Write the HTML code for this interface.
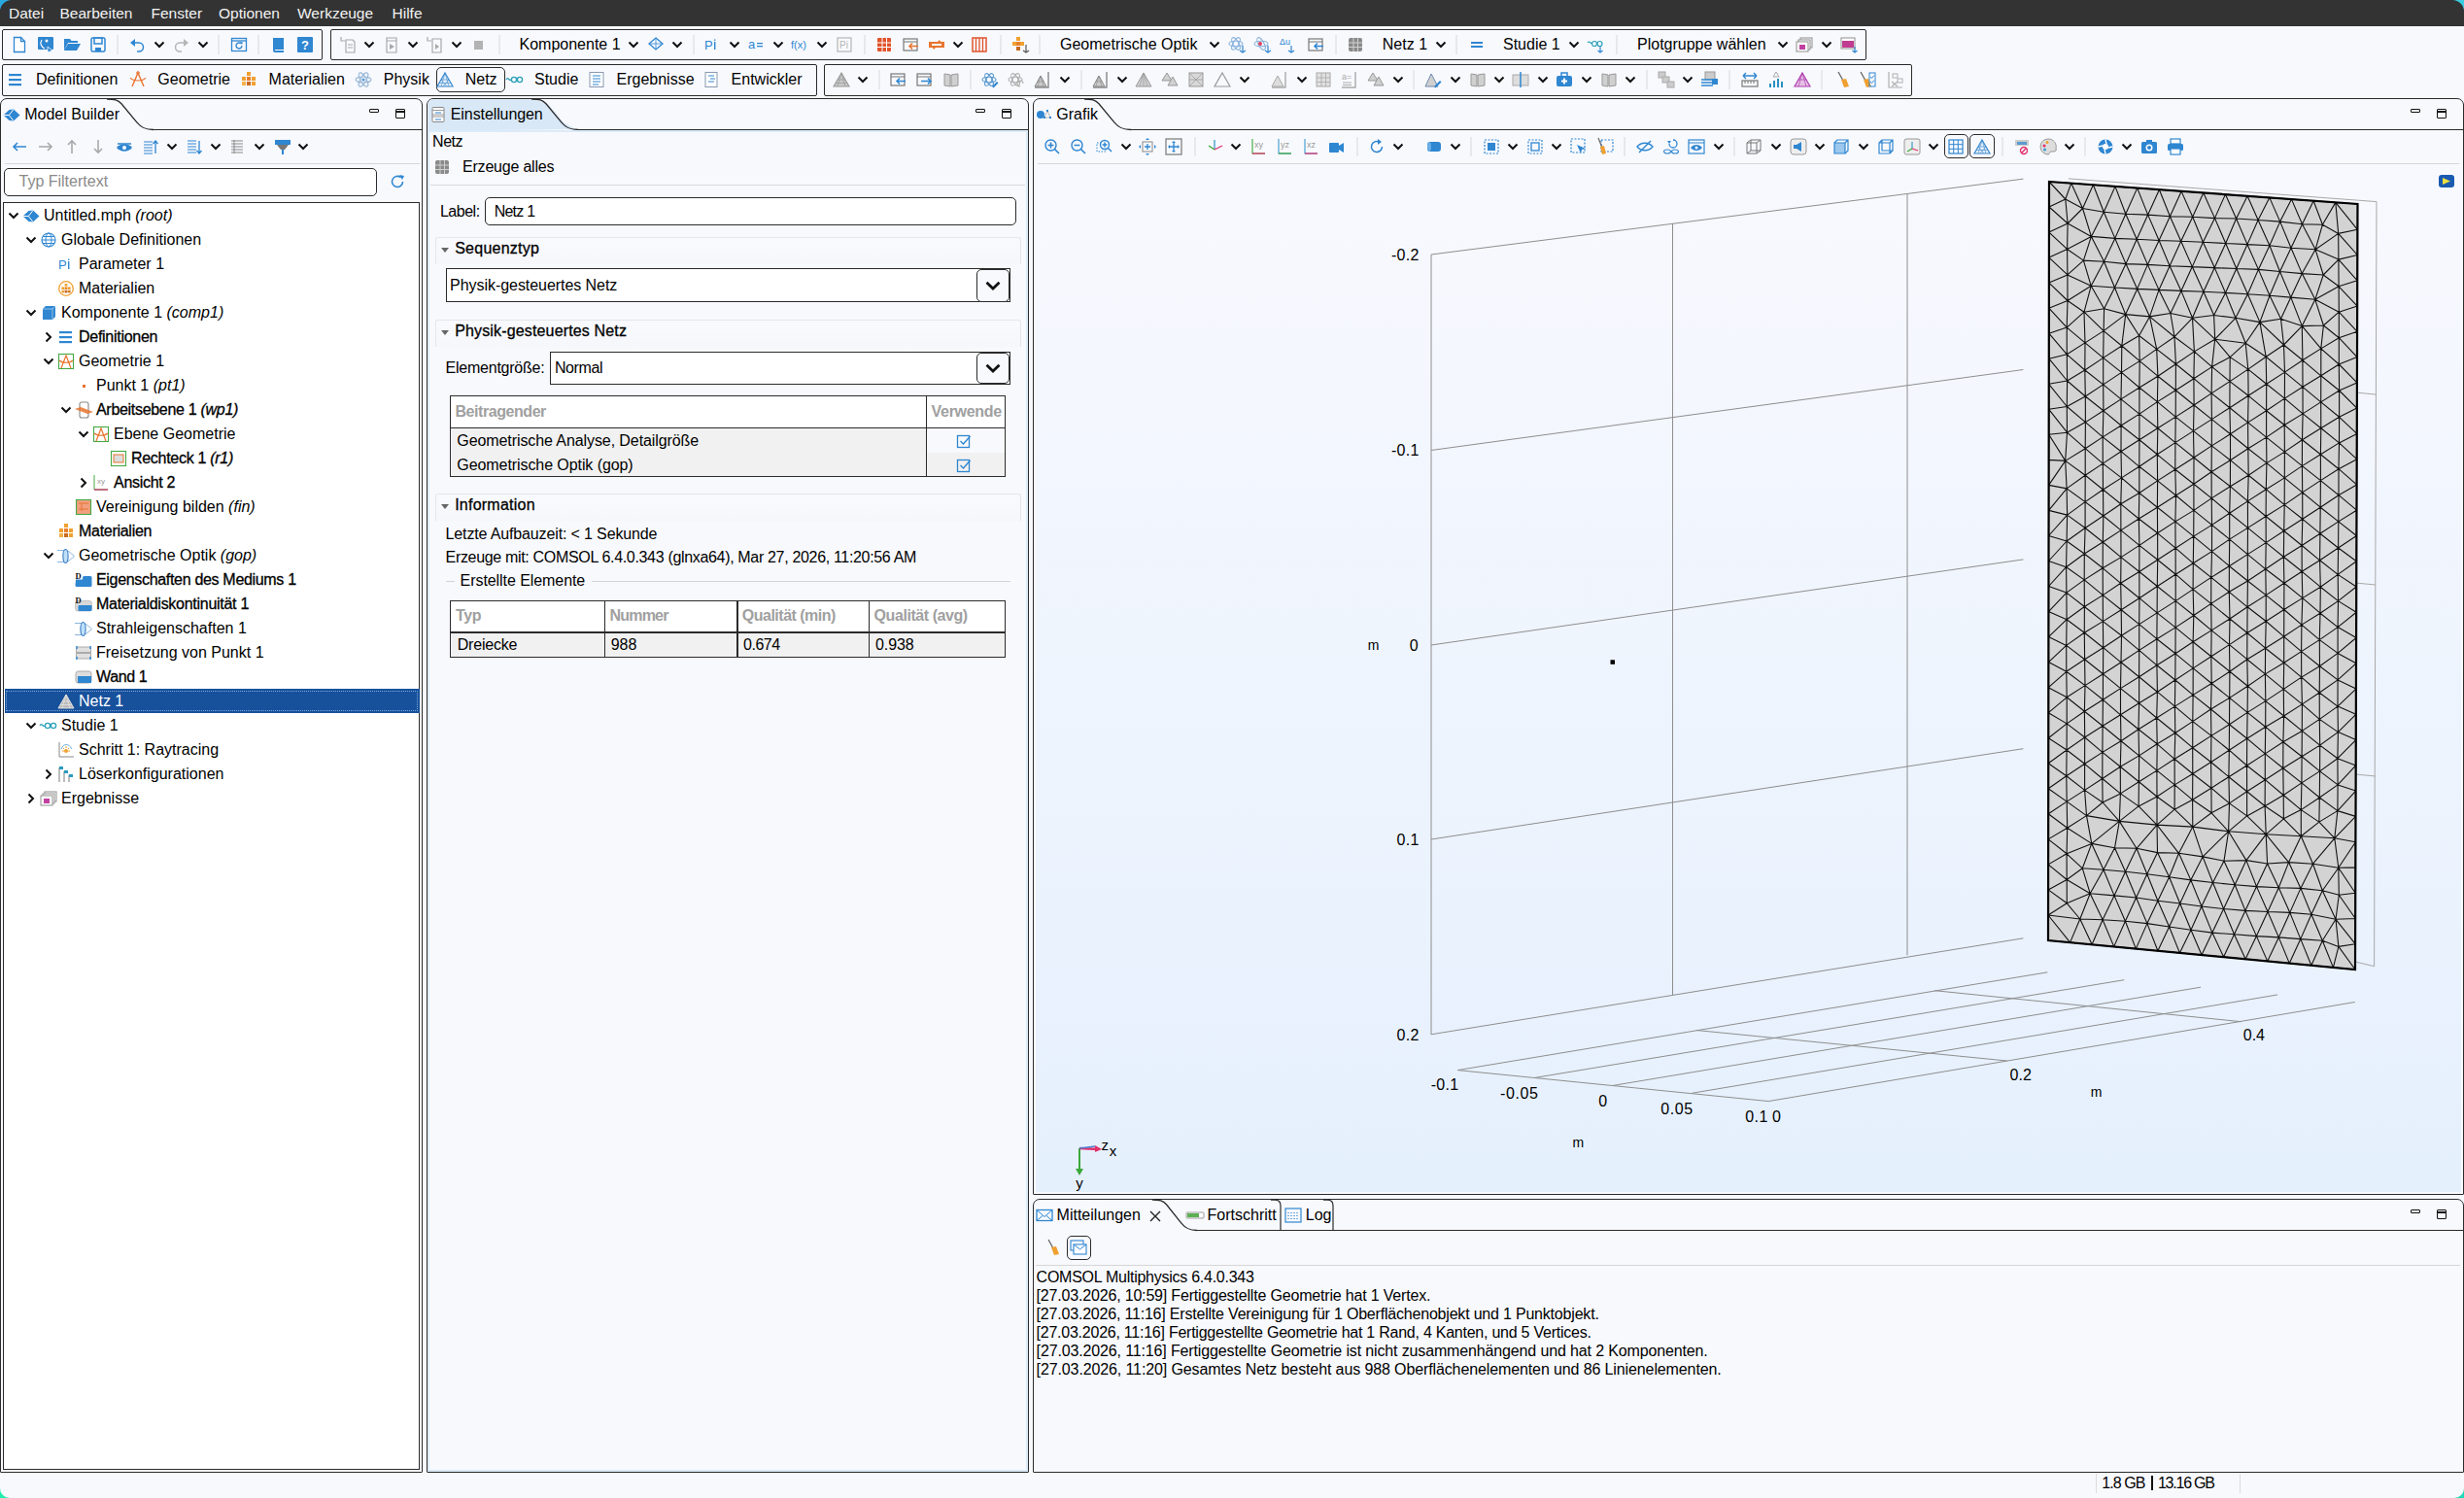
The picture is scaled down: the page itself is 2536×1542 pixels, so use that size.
<!DOCTYPE html><html><head><meta charset="utf-8"><style>html,body{margin:0;padding:0;width:2536px;height:1542px;overflow:hidden;background:#f8f9fd;}body{position:relative;font-family:"Liberation Sans",sans-serif;}.t{position:absolute;white-space:pre;}i{font-style:italic}</style></head><body>
<div style="position:absolute;left:0px;top:0px;width:2536px;height:27px;background:#333333"></div>
<svg style="position:absolute;left:0px;top:0px;" width="12" height="12" viewBox="0 0 12 12"><path d="M0 0h12A12 12 0 0 0 0 12z" fill="#2aa9e0"/></svg>
<svg style="position:absolute;left:2524px;top:0px;" width="12" height="12" viewBox="0 0 12 12"><path d="M0 0h12v12A12 12 0 0 0 0 0z" fill="#3ccbe0"/></svg>
<div class="t " style="left:9px;top:3.5px;font-size:15.5px;line-height:20px;font-weight:normal;color:#f2f2f2;">Datei</div>
<div class="t " style="left:61.5px;top:3.5px;font-size:15.5px;line-height:20px;font-weight:normal;color:#f2f2f2;">Bearbeiten</div>
<div class="t " style="left:155.5px;top:3.5px;font-size:15.5px;line-height:20px;font-weight:normal;color:#f2f2f2;">Fenster</div>
<div class="t " style="left:225px;top:3.5px;font-size:15.5px;line-height:20px;font-weight:normal;color:#f2f2f2;">Optionen</div>
<div class="t " style="left:306px;top:3.5px;font-size:15.5px;line-height:20px;font-weight:normal;color:#f2f2f2;">Werkzeuge</div>
<div class="t " style="left:403.5px;top:3.5px;font-size:15.5px;line-height:20px;font-weight:normal;color:#f2f2f2;">Hilfe</div>
<div style="position:absolute;left:2px;top:30px;width:330px;height:32px;box-sizing:border-box;border:1.3px solid #2b2b2b;border-radius:2px"></div>
<div style="position:absolute;left:340px;top:30px;width:1581px;height:32px;box-sizing:border-box;border:1.3px solid #2b2b2b;border-radius:2px"></div>
<svg style="position:absolute;left:9.5px;top:35.5px" width="20" height="20" viewBox="0 0 20 20"><path d="M4.5 2.5h7l4 4v11h-11z" fill="#fff" stroke="#2f86d1" stroke-width="1.3"/><path d="M11.5 2.5v4h4" fill="none" stroke="#2f86d1" stroke-width="1.3"/></svg>
<svg style="position:absolute;left:36.8px;top:35.5px" width="20" height="20" viewBox="0 0 20 20"><rect x="2" y="2" width="16" height="13" rx="1" fill="#2f86d1"/><path d="M6 5a6 6 0 0 0 3 9" stroke="#fff" stroke-width="1.2" fill="none"/><path d="M12 12l5 4-5 2z" fill="#2f86d1" stroke="#fff" stroke-width=".8"/><circle cx="11" cy="6" r="1.5" fill="#fff"/></svg>
<svg style="position:absolute;left:63.5px;top:35.5px" width="20" height="20" viewBox="0 0 20 20"><path d="M2 4h6l1.5 2H16v2H6L2 16z" fill="#2f86d1"/><path d="M6 9h13l-4 7H2z" fill="#2f86d1"/></svg>
<svg style="position:absolute;left:90.8px;top:35.5px" width="20" height="20" viewBox="0 0 20 20"><rect x="3" y="3" width="14" height="14" rx="1.5" fill="none" stroke="#2f86d1" stroke-width="1.5"/><rect x="6" y="3" width="8" height="6" fill="none" stroke="#2f86d1" stroke-width="1.5"/><rect x="7" y="13" width="6" height="4" fill="#2f86d1"/></svg>
<svg style="position:absolute;left:111.0px;top:35.5px" width="20" height="20" viewBox="0 0 20 20"><line x1="10" y1="0" x2="10" y2="20" stroke="#d8d8d8" stroke-width="1"/></svg>
<svg style="position:absolute;left:132.0px;top:35.5px" width="20" height="20" viewBox="0 0 20 20"><path d="M5 8h6a4.5 4.5 0 0 1 0 9H9" fill="none" stroke="#2f86d1" stroke-width="1.5"/><path d="M2 8l5-4v8z" fill="#2f86d1"/></svg>
<svg style="position:absolute;left:153.6px;top:35.5px" width="20" height="20" viewBox="0 0 20 20"><polyline points="5.5,7.5 10,12 14.5,7.5" fill="none" stroke="#111" stroke-width="2"/></svg>
<svg style="position:absolute;left:176.0px;top:35.5px" width="20" height="20" viewBox="0 0 20 20"><path d="M15 8H9a4.5 4.5 0 0 0 0 9h2" fill="none" stroke="#b5b5b5" stroke-width="1.5"/><path d="M18 8l-5-4v8z" fill="#b5b5b5"/></svg>
<svg style="position:absolute;left:198.6px;top:35.5px" width="20" height="20" viewBox="0 0 20 20"><polyline points="5.5,7.5 10,12 14.5,7.5" fill="none" stroke="#111" stroke-width="2"/></svg>
<svg style="position:absolute;left:215.0px;top:35.5px" width="20" height="20" viewBox="0 0 20 20"><line x1="10" y1="0" x2="10" y2="20" stroke="#d8d8d8" stroke-width="1"/></svg>
<svg style="position:absolute;left:235.5px;top:35.5px" width="20" height="20" viewBox="0 0 20 20"><rect x="2.5" y="3.5" width="15" height="13" fill="none" stroke="#2f86d1" stroke-width="1.3"/><line x1="2.5" y1="6" x2="17.5" y2="6" stroke="#2f86d1" stroke-width="1.3"/><path d="M13 11a3 3 0 1 1-1-2.3" fill="none" stroke="#2f86d1" stroke-width="1.4"/><path d="M11 7l3 0.5-1 2.5z" fill="#2f86d1"/></svg>
<svg style="position:absolute;left:256.0px;top:35.5px" width="20" height="20" viewBox="0 0 20 20"><line x1="10" y1="0" x2="10" y2="20" stroke="#d8d8d8" stroke-width="1"/></svg>
<svg style="position:absolute;left:276.5px;top:35.5px" width="20" height="20" viewBox="0 0 20 20"><path d="M4 3h11v15H6a2 2 0 0 1-2-2z" fill="#2f86d1"/><line x1="6" y1="15.5" x2="15" y2="15.5" stroke="#fff" stroke-width="1"/></svg>
<svg style="position:absolute;left:303.8px;top:35.5px" width="20" height="20" viewBox="0 0 20 20"><rect x="2" y="2" width="16" height="16" rx="1" fill="#2f86d1"/><text x="10" y="15" font-family="Liberation Sans" font-size="13" font-weight="bold" fill="#fff" text-anchor="middle">?</text></svg>
<svg style="position:absolute;left:348.4px;top:35.5px" width="20" height="20" viewBox="0 0 20 20"><path d="M8 5h7l2 2v11H8z" fill="none" stroke="#a8a8a8" stroke-width="1.2"/><path d="M3 2v4h4" fill="none" stroke="#a8a8a8" stroke-width="1.2"/><line x1="10" y1="10" x2="15" y2="10" stroke="#a8a8a8"/><line x1="10" y1="13" x2="15" y2="13" stroke="#a8a8a8"/></svg>
<svg style="position:absolute;left:369.7px;top:35.5px" width="20" height="20" viewBox="0 0 20 20"><polyline points="5.5,7.5 10,12 14.5,7.5" fill="none" stroke="#111" stroke-width="2"/></svg>
<svg style="position:absolute;left:392.6px;top:35.5px" width="20" height="20" viewBox="0 0 20 20"><path d="M5 3h10v15H5z" fill="none" stroke="#a8a8a8" stroke-width="1.2"/><line x1="5" y1="6" x2="15" y2="6" stroke="#a8a8a8"/><path d="M8 9l5 3-5 3z" fill="#a8a8a8"/></svg>
<svg style="position:absolute;left:415.0px;top:35.5px" width="20" height="20" viewBox="0 0 20 20"><polyline points="5.5,7.5 10,12 14.5,7.5" fill="none" stroke="#111" stroke-width="2"/></svg>
<svg style="position:absolute;left:438.0px;top:35.5px" width="20" height="20" viewBox="0 0 20 20"><path d="M7 4h9v14H7z" fill="none" stroke="#a8a8a8" stroke-width="1.2"/><path d="M2 2v4h4" fill="none" stroke="#a8a8a8" stroke-width="1.2"/><path d="M10 9l4 3-4 3z" fill="#a8a8a8"/></svg>
<svg style="position:absolute;left:459.6px;top:35.5px" width="20" height="20" viewBox="0 0 20 20"><polyline points="5.5,7.5 10,12 14.5,7.5" fill="none" stroke="#111" stroke-width="2"/></svg>
<svg style="position:absolute;left:482.7px;top:35.5px" width="20" height="20" viewBox="0 0 20 20"><rect x="5" y="6" width="9" height="9" fill="#b3b3b3"/></svg>
<svg style="position:absolute;left:503.5px;top:35.5px" width="20" height="20" viewBox="0 0 20 20"><line x1="10" y1="0" x2="10" y2="20" stroke="#d8d8d8" stroke-width="1"/></svg>
<svg style="position:absolute;left:642.0px;top:35.5px" width="20" height="20" viewBox="0 0 20 20"><polyline points="5.5,7.5 10,12 14.5,7.5" fill="none" stroke="#111" stroke-width="2"/></svg>
<svg style="position:absolute;left:665.0px;top:35.5px" width="20" height="20" viewBox="0 0 20 20"><path d="M10 3l7 6-7 6-7-6z" fill="none" stroke="#2f86d1" stroke-width="1.3"/><path d="M3 9h14M10 3v12" stroke="#2f86d1" stroke-width=".8"/></svg>
<svg style="position:absolute;left:686.6px;top:35.5px" width="20" height="20" viewBox="0 0 20 20"><polyline points="5.5,7.5 10,12 14.5,7.5" fill="none" stroke="#111" stroke-width="2"/></svg>
<svg style="position:absolute;left:703.6px;top:35.5px" width="20" height="20" viewBox="0 0 20 20"><line x1="10" y1="0" x2="10" y2="20" stroke="#d8d8d8" stroke-width="1"/></svg>
<svg style="position:absolute;left:723.0px;top:35.5px" width="20" height="20" viewBox="0 0 20 20"><text x="2" y="15" font-family="Liberation Sans" font-size="13" fill="#2f86d1">P</text><rect x="12" y="7" width="1.4" height="8" fill="#2f86d1"/><rect x="12" y="4.5" width="1.4" height="1.4" fill="#2f86d1"/></svg>
<svg style="position:absolute;left:745.7px;top:35.5px" width="20" height="20" viewBox="0 0 20 20"><polyline points="5.5,7.5 10,12 14.5,7.5" fill="none" stroke="#111" stroke-width="2"/></svg>
<svg style="position:absolute;left:769.0px;top:35.5px" width="20" height="20" viewBox="0 0 20 20"><text x="1" y="14" font-family="Liberation Sans" font-size="13" fill="#2f86d1">a</text><rect x="10" y="8" width="6" height="1.3" fill="#2f86d1"/><rect x="10" y="11" width="6" height="1.3" fill="#2f86d1"/></svg>
<svg style="position:absolute;left:790.6px;top:35.5px" width="20" height="20" viewBox="0 0 20 20"><polyline points="5.5,7.5 10,12 14.5,7.5" fill="none" stroke="#111" stroke-width="2"/></svg>
<svg style="position:absolute;left:814.4px;top:35.5px" width="20" height="20" viewBox="0 0 20 20"><text x="0" y="14" font-family="Liberation Sans" font-size="11" fill="#2f86d1">f(x)</text></svg>
<svg style="position:absolute;left:836.0px;top:35.5px" width="20" height="20" viewBox="0 0 20 20"><polyline points="5.5,7.5 10,12 14.5,7.5" fill="none" stroke="#111" stroke-width="2"/></svg>
<svg style="position:absolute;left:858.5px;top:35.5px" width="20" height="20" viewBox="0 0 20 20"><rect x="3" y="3" width="14" height="14" fill="none" stroke="#b5b5b5" stroke-width="1.2"/><text x="5" y="14" font-family="Liberation Sans" font-size="10" fill="#b5b5b5">Pi</text></svg>
<svg style="position:absolute;left:879.8px;top:35.5px" width="20" height="20" viewBox="0 0 20 20"><line x1="10" y1="0" x2="10" y2="20" stroke="#d8d8d8" stroke-width="1"/></svg>
<svg style="position:absolute;left:899.7px;top:35.5px" width="20" height="20" viewBox="0 0 20 20"><rect x="3" y="3" width="14" height="14" rx="1" fill="#e0532c"/><path d="M3 8h14M3 12.5h14M8 3v14M12.5 3v14" stroke="#fff" stroke-width="1"/></svg>
<svg style="position:absolute;left:926.6px;top:35.5px" width="20" height="20" viewBox="0 0 20 20"><rect x="3" y="4" width="14" height="12" fill="none" stroke="#777" stroke-width="1.2"/><line x1="3" y1="7" x2="17" y2="7" stroke="#777"/><path d="M18 11.5H9M12 8.5l-3 3 3 3" fill="none" stroke="#e8742e" stroke-width="1.5"/></svg>
<svg style="position:absolute;left:953.6px;top:35.5px" width="20" height="20" viewBox="0 0 20 20"><path d="M4 8h10l-2-2M16 12H6l2 2" fill="none" stroke="#e8742e" stroke-width="2.2"/><rect x="2" y="7" width="3" height="6" fill="#e8742e"/><rect x="15" y="7" width="3" height="6" fill="#e8742e"/></svg>
<svg style="position:absolute;left:975.8px;top:35.5px" width="20" height="20" viewBox="0 0 20 20"><polyline points="5.5,7.5 10,12 14.5,7.5" fill="none" stroke="#111" stroke-width="2"/></svg>
<svg style="position:absolute;left:998.2px;top:35.5px" width="20" height="20" viewBox="0 0 20 20"><rect x="3" y="3" width="14" height="14" fill="none" stroke="#e0532c" stroke-width="1.5"/><path d="M6.5 3v14M10 3v14M13.5 3v14" stroke="#e0532c" stroke-width="1.3"/></svg>
<svg style="position:absolute;left:1019.5px;top:35.5px" width="20" height="20" viewBox="0 0 20 20"><line x1="10" y1="0" x2="10" y2="20" stroke="#d8d8d8" stroke-width="1"/></svg>
<svg style="position:absolute;left:1039.7px;top:35.5px" width="20" height="20" viewBox="0 0 20 20"><rect x="6" y="2" width="4" height="4" fill="#f0a030"/><rect x="2" y="7" width="4" height="4" fill="#f0a030"/><rect x="6" y="7" width="4" height="4" fill="#e8802a"/><rect x="10" y="7" width="4" height="4" fill="#f0a030"/><rect x="6" y="12" width="4" height="4" fill="#c86a20"/><path d="M16 10v8M13 16l3 2 3-2" fill="none" stroke="#555" stroke-width="1.2"/></svg>
<svg style="position:absolute;left:1060.0px;top:35.5px" width="20" height="20" viewBox="0 0 20 20"><line x1="10" y1="0" x2="10" y2="20" stroke="#d8d8d8" stroke-width="1"/></svg>
<svg style="position:absolute;left:1239.7px;top:35.5px" width="20" height="20" viewBox="0 0 20 20"><polyline points="5.5,7.5 10,12 14.5,7.5" fill="none" stroke="#111" stroke-width="2"/></svg>
<svg style="position:absolute;left:1263.0px;top:35.5px" width="20" height="20" viewBox="0 0 20 20"><ellipse cx="9" cy="9" rx="7" ry="2.8" fill="none" stroke="#8ab4dd" stroke-width="1.1"/><ellipse cx="9" cy="9" rx="7" ry="2.8" fill="none" stroke="#8ab4dd" stroke-width="1.1" transform="rotate(60 9 9)"/><ellipse cx="9" cy="9" rx="7" ry="2.8" fill="none" stroke="#8ab4dd" stroke-width="1.1" transform="rotate(-60 9 9)"/><path d="M16 11v7M13 16l3 2 3-2" fill="none" stroke="#2f86d1" stroke-width="1.2"/></svg>
<svg style="position:absolute;left:1289.0px;top:35.5px" width="20" height="20" viewBox="0 0 20 20"><ellipse cx="9" cy="9" rx="7" ry="2.8" fill="none" stroke="#8ab4dd" stroke-width="1.1"/><ellipse cx="9" cy="9" rx="7" ry="2.8" fill="none" stroke="#8ab4dd" stroke-width="1.1" transform="rotate(60 9 9)"/><circle cx="8" cy="9" r="2" fill="#e04060"/><path d="M16 11v7M13 16l3 2 3-2" fill="none" stroke="#2f86d1" stroke-width="1.2"/></svg>
<svg style="position:absolute;left:1316.0px;top:35.5px" width="20" height="20" viewBox="0 0 20 20"><text x="1" y="10" font-family="Liberation Sans" font-size="9" fill="#2f86d1">Δu</text><path d="M13 11v7M10 16l3 2 3-2" fill="none" stroke="#2f86d1" stroke-width="1.2"/></svg>
<svg style="position:absolute;left:1343.8px;top:35.5px" width="20" height="20" viewBox="0 0 20 20"><rect x="3" y="4" width="14" height="12" fill="none" stroke="#777" stroke-width="1.2"/><line x1="3" y1="7" x2="17" y2="7" stroke="#777"/><path d="M18 11.5H9M12 8.5l-3 3 3 3" fill="none" stroke="#2f86d1" stroke-width="1.5"/></svg>
<svg style="position:absolute;left:1364.5px;top:35.5px" width="20" height="20" viewBox="0 0 20 20"><line x1="10" y1="0" x2="10" y2="20" stroke="#d8d8d8" stroke-width="1"/></svg>
<svg style="position:absolute;left:1385.0px;top:35.5px" width="20" height="20" viewBox="0 0 20 20"><rect x="3" y="3" width="14" height="14" rx="2" fill="#8a8a8a"/><path d="M3 8h14M3 12.5h14M8 3v14M12.5 3v14" stroke="#d0d0d0" stroke-width="1"/></svg>
<svg style="position:absolute;left:1473.0px;top:35.5px" width="20" height="20" viewBox="0 0 20 20"><polyline points="5.5,7.5 10,12 14.5,7.5" fill="none" stroke="#111" stroke-width="2"/></svg>
<svg style="position:absolute;left:1489.0px;top:35.5px" width="20" height="20" viewBox="0 0 20 20"><line x1="10" y1="0" x2="10" y2="20" stroke="#d8d8d8" stroke-width="1"/></svg>
<svg style="position:absolute;left:1510.0px;top:35.5px" width="20" height="20" viewBox="0 0 20 20"><rect x="4" y="7" width="12" height="2" fill="#2f86d1"/><rect x="4" y="11" width="12" height="2" fill="#2f86d1"/></svg>
<svg style="position:absolute;left:1610.0px;top:35.5px" width="20" height="20" viewBox="0 0 20 20"><polyline points="5.5,7.5 10,12 14.5,7.5" fill="none" stroke="#111" stroke-width="2"/></svg>
<svg style="position:absolute;left:1633.0px;top:35.5px" width="20" height="20" viewBox="0 0 20 20"><circle cx="8" cy="9" r="2.5" fill="none" stroke="#2aa0b8" stroke-width="1.2"/><circle cx="13.5" cy="9" r="2.5" fill="none" stroke="#2aa0b8" stroke-width="1.2"/><path d="M1 8c2-3 3 2 4.5 0" fill="none" stroke="#2aa0b8" stroke-width="1.2"/><path d="M14 12v6M11.5 16l2.5 2 2.5-2" fill="none" stroke="#2f86d1" stroke-width="1.2"/></svg>
<svg style="position:absolute;left:1653.7px;top:35.5px" width="20" height="20" viewBox="0 0 20 20"><line x1="10" y1="0" x2="10" y2="20" stroke="#d8d8d8" stroke-width="1"/></svg>
<svg style="position:absolute;left:1824.8px;top:35.5px" width="20" height="20" viewBox="0 0 20 20"><polyline points="5.5,7.5 10,12 14.5,7.5" fill="none" stroke="#111" stroke-width="2"/></svg>
<svg style="position:absolute;left:1847.4px;top:35.5px" width="20" height="20" viewBox="0 0 20 20"><rect x="6" y="3" width="12" height="10" fill="none" stroke="#999" stroke-width="1.1"/><rect x="4" y="5" width="12" height="10" fill="#fff" stroke="#999" stroke-width="1.1"/><rect x="2" y="7" width="12" height="10" fill="#fff" stroke="#999" stroke-width="1.1"/><rect x="5" y="10" width="6" height="5" fill="#c040a0"/></svg>
<svg style="position:absolute;left:1869.5px;top:35.5px" width="20" height="20" viewBox="0 0 20 20"><polyline points="5.5,7.5 10,12 14.5,7.5" fill="none" stroke="#111" stroke-width="2"/></svg>
<svg style="position:absolute;left:1893.0px;top:35.5px" width="20" height="20" viewBox="0 0 20 20"><rect x="2" y="3" width="14" height="11" fill="#fff" stroke="#999" stroke-width="1.1"/><rect x="3" y="6" width="12" height="7" fill="#c03c90"/><path d="M16 12v6M13.5 16l2.5 2 2.5-2" fill="none" stroke="#2f86d1" stroke-width="1.2"/></svg>
<div class="t " style="left:534.5px;top:35.5px;font-size:16px;line-height:20px;font-weight:normal;color:#000;">Komponente 1</div>
<div class="t " style="left:1091px;top:35.5px;font-size:16px;line-height:20px;font-weight:normal;color:#000;">Geometrische Optik</div>
<div class="t " style="left:1422.8px;top:35.5px;font-size:16px;line-height:20px;font-weight:normal;color:#000;">Netz 1</div>
<div class="t " style="left:1547px;top:35.5px;font-size:16px;line-height:20px;font-weight:normal;color:#000;">Studie 1</div>
<div class="t " style="left:1685px;top:35.5px;font-size:16px;line-height:20px;font-weight:normal;color:#000;">Plotgruppe wählen</div>
<div style="position:absolute;left:2px;top:66px;width:839px;height:33px;box-sizing:border-box;border:1.3px solid #2b2b2b;border-radius:2px"></div>
<div style="position:absolute;left:848px;top:66px;width:1120px;height:33px;box-sizing:border-box;border:1.3px solid #2b2b2b;border-radius:2px"></div>
<div style="position:absolute;left:449.3px;top:69px;width:70.3px;height:26px;box-sizing:border-box;border:1.3px solid #2b2b2b;border-radius:5px"></div>
<svg style="position:absolute;left:5.6px;top:72.0px" width="20" height="20" viewBox="0 0 20 20"><rect x="3" y="4" width="13" height="2.2" fill="#2f86d1"/><rect x="3" y="9" width="13" height="2.2" fill="#2f86d1"/><rect x="3" y="14" width="13" height="2.2" fill="#2f86d1"/></svg>
<svg style="position:absolute;left:132.3px;top:72.0px" width="20" height="20" viewBox="0 0 20 20"><path d="M4 17L10 3 16 17" fill="none" stroke="#e8742e" stroke-width="1.4"/><path d="M2 8c3 4 13 4 16 0" fill="none" stroke="#e8742e" stroke-width="1.2"/><circle cx="10" cy="3" r="1.3" fill="none" stroke="#e8742e"/></svg>
<svg style="position:absolute;left:245.8px;top:72.0px" width="20" height="20" viewBox="0 0 20 20"><rect x="8" y="2" width="4" height="4" fill="#f0a030"/><rect x="3" y="7" width="4" height="4" fill="#f0a030"/><rect x="8" y="7" width="4" height="4" fill="#e8802a"/><rect x="13" y="7" width="4" height="4" fill="#f0a030"/><rect x="3" y="12" width="4" height="4" fill="#f4b04a"/><rect x="8" y="12" width="4" height="4" fill="#c86a20"/><rect x="13" y="12" width="4" height="4" fill="#f0a030"/></svg>
<svg style="position:absolute;left:364.0px;top:72.0px" width="20" height="20" viewBox="0 0 20 20"><ellipse cx="10" cy="10" rx="8" ry="3" fill="none" stroke="#9ab8d8" stroke-width="1.1"/><ellipse cx="10" cy="10" rx="8" ry="3" fill="none" stroke="#9ab8d8" stroke-width="1.1" transform="rotate(60 10 10)"/><ellipse cx="10" cy="10" rx="8" ry="3" fill="none" stroke="#9ab8d8" stroke-width="1.1" transform="rotate(-60 10 10)"/><circle cx="10" cy="10" r="1.6" fill="#5a9ad0"/></svg>
<svg style="position:absolute;left:448.4px;top:72.0px" width="20" height="20" viewBox="0 0 20 20"><path d="M10 3L18 17H2z" fill="#e8f0f8" stroke="#3a8ad0" stroke-width="1.2"/><path d="M6 10h8M4 13.5h12M10 3l-4 14M10 3l4 14M6 10l6 7M14 10l-6 7" stroke="#3a8ad0" stroke-width=".6"/></svg>
<svg style="position:absolute;left:520.0px;top:72.0px" width="20" height="20" viewBox="0 0 20 20"><circle cx="9" cy="10" r="2.6" fill="none" stroke="#2aa0b8" stroke-width="1.3"/><circle cx="15" cy="10" r="2.6" fill="none" stroke="#2aa0b8" stroke-width="1.3"/><path d="M1 10c2-4 3 2 5 0" fill="none" stroke="#2aa0b8" stroke-width="1.3"/></svg>
<svg style="position:absolute;left:603.5px;top:72.0px" width="20" height="20" viewBox="0 0 20 20"><rect x="3" y="2.5" width="14" height="15" fill="#fff" stroke="#8a9ab0" stroke-width="1"/><path d="M6 6h8M6 9h8M6 12h8M6 15h6" stroke="#2f86d1" stroke-width="1"/></svg>
<svg style="position:absolute;left:722.0px;top:72.0px" width="20" height="20" viewBox="0 0 20 20"><rect x="4" y="2.5" width="12" height="15" fill="#fff" stroke="#8a9ab0" stroke-width="1"/><path d="M7 6h6M9 9h5M7 12h6" stroke="#2f86d1" stroke-width="1"/></svg>
<div class="t " style="left:36.9px;top:72.0px;font-size:16px;line-height:20px;font-weight:normal;color:#000;">Definitionen</div>
<div class="t " style="left:162.3px;top:72.0px;font-size:16px;line-height:20px;font-weight:normal;color:#000;">Geometrie</div>
<div class="t " style="left:276.6px;top:72.0px;font-size:16px;line-height:20px;font-weight:normal;color:#000;">Materialien</div>
<div class="t " style="left:394.8px;top:72.0px;font-size:16px;line-height:20px;font-weight:normal;color:#000;">Physik</div>
<div class="t " style="left:478.7px;top:72.0px;font-size:16px;line-height:20px;font-weight:normal;color:#000;">Netz</div>
<div class="t " style="left:550px;top:72.0px;font-size:16px;line-height:20px;font-weight:normal;color:#000;">Studie</div>
<div class="t " style="left:634.5px;top:72.0px;font-size:16px;line-height:20px;font-weight:normal;color:#000;">Ergebnisse</div>
<div class="t " style="left:752.6px;top:72.0px;font-size:16px;line-height:20px;font-weight:normal;color:#000;">Entwickler</div>
<svg style="position:absolute;left:855.6px;top:72.0px" width="20" height="20" viewBox="0 0 20 20"><path d="M10 3L18 17H2z" fill="#c8c8c8" stroke="#9a9a9a" stroke-width="1.1"/><path d="M6 10h8M4 13.5h12M10 3l-4 14M10 3l4 14" stroke="#9a9a9a" stroke-width=".7"/></svg>
<svg style="position:absolute;left:877.5px;top:72.0px" width="20" height="20" viewBox="0 0 20 20"><polyline points="5.5,7.5 10,12 14.5,7.5" fill="none" stroke="#111" stroke-width="2"/></svg>
<svg style="position:absolute;left:894.5px;top:72.0px" width="20" height="20" viewBox="0 0 20 20"><line x1="10" y1="0" x2="10" y2="20" stroke="#d8d8d8" stroke-width="1"/></svg>
<svg style="position:absolute;left:914.4px;top:72.0px" width="20" height="20" viewBox="0 0 20 20"><rect x="3" y="4" width="14" height="12" fill="none" stroke="#777" stroke-width="1.2"/><line x1="3" y1="7" x2="17" y2="7" stroke="#777"/><path d="M18 11.5H9M12 8.5l-3 3 3 3" fill="none" stroke="#2f86d1" stroke-width="1.5"/></svg>
<svg style="position:absolute;left:941.4px;top:72.0px" width="20" height="20" viewBox="0 0 20 20"><rect x="3" y="4" width="14" height="12" fill="none" stroke="#777" stroke-width="1.2"/><line x1="3" y1="7" x2="17" y2="7" stroke="#777"/><path d="M7 11.5h10M14 8.5l3 3-3 3" fill="none" stroke="#2f86d1" stroke-width="1.5"/></svg>
<svg style="position:absolute;left:968.7px;top:72.0px" width="20" height="20" viewBox="0 0 20 20"><path d="M3 4l6 1v12l-6-1z" fill="#d0d0d0" stroke="#999" stroke-width="1"/><path d="M10 5l7-1v12l-7 1z" fill="#d0d0d0" stroke="#999" stroke-width="1"/></svg>
<svg style="position:absolute;left:989.0px;top:72.0px" width="20" height="20" viewBox="0 0 20 20"><line x1="10" y1="0" x2="10" y2="20" stroke="#d8d8d8" stroke-width="1"/></svg>
<svg style="position:absolute;left:1009.0px;top:72.0px" width="20" height="20" viewBox="0 0 20 20"><ellipse cx="9" cy="10" rx="7" ry="2.8" fill="none" stroke="#5a9ad0" stroke-width="1.1"/><ellipse cx="9" cy="10" rx="7" ry="2.8" fill="none" stroke="#5a9ad0" stroke-width="1.1" transform="rotate(60 9 10)"/><ellipse cx="9" cy="10" rx="7" ry="2.8" fill="none" stroke="#5a9ad0" stroke-width="1.1" transform="rotate(-60 9 10)"/><path d="M12 17l5-5 1.5 1.5-5 5z" fill="#2f86d1"/></svg>
<svg style="position:absolute;left:1036.0px;top:72.0px" width="20" height="20" viewBox="0 0 20 20"><ellipse cx="9" cy="10" rx="7" ry="2.8" fill="none" stroke="#b0b0b0" stroke-width="1.1"/><ellipse cx="9" cy="10" rx="7" ry="2.8" fill="none" stroke="#b0b0b0" stroke-width="1.1" transform="rotate(60 9 10)"/><ellipse cx="9" cy="10" rx="7" ry="2.8" fill="none" stroke="#b0b0b0" stroke-width="1.1" transform="rotate(-60 9 10)"/><path d="M14 17a3 3 0 1 1 3-3" fill="none" stroke="#b0b0b0" stroke-width="1.1"/></svg>
<svg style="position:absolute;left:1063.0px;top:72.0px" width="20" height="20" viewBox="0 0 20 20"><path d="M8 6L14 17H2z" fill="#ccc" stroke="#888" stroke-width="1"/><path d="M5 12h6M8 6l-3 11M8 6l3 11" stroke="#888" stroke-width=".6"/><path d="M16 2v16H2" fill="none" stroke="#888" stroke-width="1.4"/></svg>
<svg style="position:absolute;left:1085.7px;top:72.0px" width="20" height="20" viewBox="0 0 20 20"><polyline points="5.5,7.5 10,12 14.5,7.5" fill="none" stroke="#111" stroke-width="2"/></svg>
<svg style="position:absolute;left:1102.8px;top:72.0px" width="20" height="20" viewBox="0 0 20 20"><line x1="10" y1="0" x2="10" y2="20" stroke="#d8d8d8" stroke-width="1"/></svg>
<svg style="position:absolute;left:1122.7px;top:72.0px" width="20" height="20" viewBox="0 0 20 20"><path d="M8 6L14 17H2z" fill="#ccc" stroke="#888" stroke-width="1"/><path d="M5 12h6M8 6l-3 11M8 6l3 11" stroke="#888" stroke-width=".6"/><path d="M16 2v16H2" fill="none" stroke="#888" stroke-width="1.4"/></svg>
<svg style="position:absolute;left:1144.5px;top:72.0px" width="20" height="20" viewBox="0 0 20 20"><polyline points="5.5,7.5 10,12 14.5,7.5" fill="none" stroke="#111" stroke-width="2"/></svg>
<svg style="position:absolute;left:1167.0px;top:72.0px" width="20" height="20" viewBox="0 0 20 20"><path d="M10 3L18 17H2z" fill="#d0d0d0" stroke="#999" stroke-width="1"/><path d="M10 3L6 17M10 3l4 14M10 3v14" stroke="#999" stroke-width=".7"/></svg>
<svg style="position:absolute;left:1193.7px;top:72.0px" width="20" height="20" viewBox="0 0 20 20"><path d="M7 3L12 11H2z" fill="#d0d0d0" stroke="#999" stroke-width="1"/><path d="M13 7L18 16H8z" fill="#d0d0d0" stroke="#999" stroke-width="1"/></svg>
<svg style="position:absolute;left:1221.3px;top:72.0px" width="20" height="20" viewBox="0 0 20 20"><rect x="3" y="3" width="14" height="14" fill="#d8d8d8" stroke="#999" stroke-width="1"/><path d="M3 3l14 14M17 3L3 17M3 10h14" stroke="#999" stroke-width=".7"/></svg>
<svg style="position:absolute;left:1248.0px;top:72.0px" width="20" height="20" viewBox="0 0 20 20"><path d="M10 3L18 17H2z" fill="none" stroke="#999" stroke-width="1.2"/></svg>
<svg style="position:absolute;left:1271.0px;top:72.0px" width="20" height="20" viewBox="0 0 20 20"><polyline points="5.5,7.5 10,12 14.5,7.5" fill="none" stroke="#111" stroke-width="2"/></svg>
<svg style="position:absolute;left:1306.6px;top:72.0px" width="20" height="20" viewBox="0 0 20 20"><path d="M8 6L14 17H2z" fill="#ddd" stroke="#aaa" stroke-width="1"/><path d="M16 2v16H2" fill="none" stroke="#aaa" stroke-width="1.4"/></svg>
<svg style="position:absolute;left:1330.0px;top:72.0px" width="20" height="20" viewBox="0 0 20 20"><polyline points="5.5,7.5 10,12 14.5,7.5" fill="none" stroke="#111" stroke-width="2"/></svg>
<svg style="position:absolute;left:1352.0px;top:72.0px" width="20" height="20" viewBox="0 0 20 20"><rect x="3" y="3" width="14" height="14" fill="#e0e0e0" stroke="#aaa" stroke-width="1"/><path d="M3 8h14M3 12.5h14M8 3v14M12.5 3v14" stroke="#aaa" stroke-width=".8"/></svg>
<svg style="position:absolute;left:1378.8px;top:72.0px" width="20" height="20" viewBox="0 0 20 20"><text x="2" y="10" font-family="Liberation Sans" font-size="9" fill="#aaa">a=</text><path d="M16 2v16H2" fill="none" stroke="#aaa" stroke-width="1.4"/><path d="M3 13h9M3 15.5h9" stroke="#aaa"/></svg>
<svg style="position:absolute;left:1406.0px;top:72.0px" width="20" height="20" viewBox="0 0 20 20"><path d="M7 3L12 11H2z" fill="#d0d0d0" stroke="#999" stroke-width="1"/><path d="M13 7L18 16H8z" fill="#d0d0d0" stroke="#999" stroke-width="1"/></svg>
<svg style="position:absolute;left:1428.8px;top:72.0px" width="20" height="20" viewBox="0 0 20 20"><polyline points="5.5,7.5 10,12 14.5,7.5" fill="none" stroke="#111" stroke-width="2"/></svg>
<svg style="position:absolute;left:1445.0px;top:72.0px" width="20" height="20" viewBox="0 0 20 20"><line x1="10" y1="0" x2="10" y2="20" stroke="#d8d8d8" stroke-width="1"/></svg>
<svg style="position:absolute;left:1465.0px;top:72.0px" width="20" height="20" viewBox="0 0 20 20"><path d="M8 4L15 17H2z" fill="#d0d0d0" stroke="#6a8ab0" stroke-width="1"/><path d="M11 17l6-6 1.5 1.5-6 6z" fill="#2f86d1"/></svg>
<svg style="position:absolute;left:1487.6px;top:72.0px" width="20" height="20" viewBox="0 0 20 20"><polyline points="5.5,7.5 10,12 14.5,7.5" fill="none" stroke="#111" stroke-width="2"/></svg>
<svg style="position:absolute;left:1510.8px;top:72.0px" width="20" height="20" viewBox="0 0 20 20"><path d="M3 4l6 1v12l-6-1z" fill="#d0d0d0" stroke="#999" stroke-width="1"/><path d="M10 5l7-1v12l-7 1z" fill="#d0d0d0" stroke="#999" stroke-width="1"/></svg>
<svg style="position:absolute;left:1532.8px;top:72.0px" width="20" height="20" viewBox="0 0 20 20"><polyline points="5.5,7.5 10,12 14.5,7.5" fill="none" stroke="#111" stroke-width="2"/></svg>
<svg style="position:absolute;left:1555.0px;top:72.0px" width="20" height="20" viewBox="0 0 20 20"><rect x="2" y="5" width="16" height="11" fill="#ddd" stroke="#aaa" stroke-width="1"/><line x1="10" y1="2" x2="10" y2="18" stroke="#2f86d1" stroke-width="1.5"/></svg>
<svg style="position:absolute;left:1577.8px;top:72.0px" width="20" height="20" viewBox="0 0 20 20"><polyline points="5.5,7.5 10,12 14.5,7.5" fill="none" stroke="#111" stroke-width="2"/></svg>
<svg style="position:absolute;left:1600.4px;top:72.0px" width="20" height="20" viewBox="0 0 20 20"><rect x="2" y="6" width="16" height="11" rx="2" fill="#2f86d1"/><rect x="7" y="3" width="6" height="4" fill="none" stroke="#2f86d1" stroke-width="1.5"/><path d="M10 8.5v6M7 11.5h6" stroke="#fff" stroke-width="2"/></svg>
<svg style="position:absolute;left:1622.5px;top:72.0px" width="20" height="20" viewBox="0 0 20 20"><polyline points="5.5,7.5 10,12 14.5,7.5" fill="none" stroke="#111" stroke-width="2"/></svg>
<svg style="position:absolute;left:1646.0px;top:72.0px" width="20" height="20" viewBox="0 0 20 20"><path d="M3 4l6 1v12l-6-1z" fill="#d0d0d0" stroke="#999" stroke-width="1"/><path d="M10 5l7-1v12l-7 1z" fill="#d0d0d0" stroke="#999" stroke-width="1"/></svg>
<svg style="position:absolute;left:1668.0px;top:72.0px" width="20" height="20" viewBox="0 0 20 20"><polyline points="5.5,7.5 10,12 14.5,7.5" fill="none" stroke="#111" stroke-width="2"/></svg>
<svg style="position:absolute;left:1684.6px;top:72.0px" width="20" height="20" viewBox="0 0 20 20"><line x1="10" y1="0" x2="10" y2="20" stroke="#d8d8d8" stroke-width="1"/></svg>
<svg style="position:absolute;left:1704.7px;top:72.0px" width="20" height="20" viewBox="0 0 20 20"><rect x="2" y="2" width="7" height="6" fill="#ccc" stroke="#aaa"/><rect x="6" y="7" width="7" height="6" fill="#ccc" stroke="#aaa"/><rect x="11" y="12" width="7" height="6" fill="#ccc" stroke="#aaa"/></svg>
<svg style="position:absolute;left:1726.8px;top:72.0px" width="20" height="20" viewBox="0 0 20 20"><polyline points="5.5,7.5 10,12 14.5,7.5" fill="none" stroke="#111" stroke-width="2"/></svg>
<svg style="position:absolute;left:1749.4px;top:72.0px" width="20" height="20" viewBox="0 0 20 20"><rect x="6" y="2" width="10" height="8" fill="#ccc" stroke="#999"/><path d="M2 10h12M2 13h12M2 16h12" stroke="#2f86d1" stroke-width="1.3"/><rect x="13" y="9" width="6" height="6" fill="#2f86d1"/></svg>
<svg style="position:absolute;left:1770.0px;top:72.0px" width="20" height="20" viewBox="0 0 20 20"><line x1="10" y1="0" x2="10" y2="20" stroke="#d8d8d8" stroke-width="1"/></svg>
<svg style="position:absolute;left:1790.8px;top:72.0px" width="20" height="20" viewBox="0 0 20 20"><path d="M3 6h14M3 6l3-3M3 6l3 3M17 6l-3-3M17 6l-3 3" fill="none" stroke="#2f86d1" stroke-width="1.4"/><rect x="2" y="11" width="16" height="6" fill="none" stroke="#777" stroke-width="1.2"/><path d="M5 11v3M8 11v3M11 11v3M14 11v3" stroke="#777"/></svg>
<svg style="position:absolute;left:1817.6px;top:72.0px" width="20" height="20" viewBox="0 0 20 20"><path d="M10 2l3 5H7z" fill="none" stroke="#aaa"/><rect x="3" y="14" width="2" height="4" fill="#2a90c0"/><rect x="7" y="11" width="2" height="7" fill="#2a90c0"/><rect x="11" y="9" width="2" height="9" fill="#2a90c0"/><rect x="15" y="12" width="2" height="6" fill="#2a90c0"/></svg>
<svg style="position:absolute;left:1844.6px;top:72.0px" width="20" height="20" viewBox="0 0 20 20"><path d="M10 3L18 17H2z" fill="#e6c0e6" stroke="#b040b0" stroke-width="1.2"/><path d="M6 10h8M10 3l-4 14M10 3l4 14" stroke="#b040b0" stroke-width=".7"/></svg>
<svg style="position:absolute;left:1865.0px;top:72.0px" width="20" height="20" viewBox="0 0 20 20"><line x1="10" y1="0" x2="10" y2="20" stroke="#d8d8d8" stroke-width="1"/></svg>
<svg style="position:absolute;left:1886.0px;top:72.0px" width="20" height="20" viewBox="0 0 20 20"><line x1="6" y1="2" x2="11" y2="11" stroke="#666" stroke-width="1.3"/><path d="M9 10l5-1 3 8-5 1z" fill="#f0a030"/></svg>
<svg style="position:absolute;left:1912.0px;top:72.0px" width="20" height="20" viewBox="0 0 20 20"><line x1="3" y1="2" x2="8" y2="11" stroke="#666" stroke-width="1.3"/><path d="M6 10l5-1 3 8-5 1z" fill="#f0a030"/><rect x="12" y="3" width="6" height="14" fill="none" stroke="#2f86d1" stroke-width="1"/><path d="M13 7l1.5 1.5 2.5-3M13 12l1.5 1.5 2.5-3" fill="none" stroke="#2f86d1" stroke-width="1"/></svg>
<svg style="position:absolute;left:1940.0px;top:72.0px" width="20" height="20" viewBox="0 0 20 20"><path d="M4 2v16h14" fill="none" stroke="#b0b0b0" stroke-width="1.2"/><path d="M7 12l6 5M13 12l-6 5" stroke="#b0b0b0" stroke-width="1.2"/><rect x="8" y="4" width="5" height="4" fill="none" stroke="#b0b0b0"/><rect x="13" y="9" width="5" height="4" fill="none" stroke="#b0b0b0"/></svg>
<div style="position:absolute;left:0px;top:101px;width:435px;height:1415px;box-sizing:border-box;border:1.3px solid #2b2b2b;border-radius:7px 7px 1px 1px;background:#f8f9fd"></div>
<svg style="position:absolute;left:110px;top:101px;" width="48" height="34" viewBox="0 0 48 34"><path d="M0 1 C7.92 1 11.440000000000001 2 14.96 5.76 L30.799999999999997 24.96 C35.2 30.4 39.6 32.5 48 32.5" fill="none" stroke="#2b2b2b" stroke-width="1.3"/></svg>
<div style="position:absolute;left:156px;top:133px;width:278px;height:1.3px;background:#2b2b2b"></div>
<svg style="position:absolute;left:2.0px;top:107.7px" width="20" height="20" viewBox="0 0 20 20"><path d="M1.5 10.5L7.5 5 12 4.5 18.5 10.5 12 16.5 7.5 16z" fill="#2f86d1"/><path d="M2 10.5H7.3L11.8 4.8M7.3 10.5L11.8 16.2" fill="none" stroke="#fff" stroke-width="1"/></svg>
<div class="t " style="left:25.2px;top:107.7px;font-size:16px;line-height:20px;font-weight:normal;color:#000;">Model Builder</div>
<div style="position:absolute;left:380px;top:112.4px;width:10px;height:4px;box-sizing:border-box;border:1.5px solid #111;border-radius:1px"></div>
<div style="position:absolute;left:406.7px;top:112.2px;width:10px;height:9.8px;box-sizing:border-box;border:1.5px solid #111;border-radius:1px"></div>
<div style="position:absolute;left:407.7px;top:114.4px;width:8px;height:1.3px;background:#111"></div>
<svg style="position:absolute;left:10.0px;top:140.6px" width="20" height="20" viewBox="0 0 20 20"><path d="M17 10H4M8 6l-4 4 4 4" fill="none" stroke="#2f86d1" stroke-width="1.6"/></svg>
<svg style="position:absolute;left:36.8px;top:140.6px" width="20" height="20" viewBox="0 0 20 20"><path d="M3 10h13M12 6l4 4-4 4" fill="none" stroke="#a8a8a8" stroke-width="1.6"/></svg>
<svg style="position:absolute;left:63.5px;top:140.6px" width="20" height="20" viewBox="0 0 20 20"><path d="M10 17V4M6 8l4-4 4 4" fill="none" stroke="#a8a8a8" stroke-width="1.6"/></svg>
<svg style="position:absolute;left:90.5px;top:140.6px" width="20" height="20" viewBox="0 0 20 20"><path d="M10 3v13M6 12l4 4 4-4" fill="none" stroke="#a8a8a8" stroke-width="1.6"/></svg>
<svg style="position:absolute;left:117.8px;top:140.6px" width="20" height="20" viewBox="0 0 20 20"><path d="M3 7h14" stroke="#2f86d1" stroke-width="1.5"/><path d="M2 11c4-5 12-5 16 0-4 5-12 5-16 0z" fill="#2f86d1"/><circle cx="10" cy="11" r="2" fill="#fff"/></svg>
<svg style="position:absolute;left:144.5px;top:140.6px" width="20" height="20" viewBox="0 0 20 20"><path d="M3 5h9M3 8h9M3 11h9M3 14h9M3 17h9" stroke="#2f86d1" stroke-width="1.2"/><path d="M15 17V4M12.5 7l2.5-3 2.5 3" fill="none" stroke="#2f86d1" stroke-width="1.3"/></svg>
<svg style="position:absolute;left:167.0px;top:140.6px" width="20" height="20" viewBox="0 0 20 20"><polyline points="5.5,7.5 10,12 14.5,7.5" fill="none" stroke="#111" stroke-width="2"/></svg>
<svg style="position:absolute;left:190.0px;top:140.6px" width="20" height="20" viewBox="0 0 20 20"><path d="M3 4h9M3 7h9M3 10h9M3 13h9M3 16h9" stroke="#2f86d1" stroke-width="1.2"/><path d="M15 4v13M12.5 14l2.5 3 2.5-3" fill="none" stroke="#2f86d1" stroke-width="1.3"/></svg>
<svg style="position:absolute;left:212.0px;top:140.6px" width="20" height="20" viewBox="0 0 20 20"><polyline points="5.5,7.5 10,12 14.5,7.5" fill="none" stroke="#111" stroke-width="2"/></svg>
<svg style="position:absolute;left:234.0px;top:140.6px" width="20" height="20" viewBox="0 0 20 20"><path d="M4 4h12M4 7h12M4 10h12M4 13h12M4 16h12" stroke="#888" stroke-width="1.2"/><path d="M7 3v14" stroke="#888" stroke-width="1"/></svg>
<svg style="position:absolute;left:256.8px;top:140.6px" width="20" height="20" viewBox="0 0 20 20"><polyline points="5.5,7.5 10,12 14.5,7.5" fill="none" stroke="#111" stroke-width="2"/></svg>
<svg style="position:absolute;left:281.0px;top:140.6px" width="20" height="20" viewBox="0 0 20 20"><rect x="2" y="3" width="16" height="5" fill="#2f86d1"/><path d="M4 8h12l-4 5h-4z" fill="#777"/><rect x="9" y="13" width="2" height="5" fill="#2f86d1"/></svg>
<svg style="position:absolute;left:302.0px;top:140.6px" width="20" height="20" viewBox="0 0 20 20"><polyline points="5.5,7.5 10,12 14.5,7.5" fill="none" stroke="#111" stroke-width="2"/></svg>
<div style="position:absolute;left:5px;top:168px;width:427px;height:1px;background:#d6d6d6"></div>
<div style="position:absolute;left:3.6px;top:172.5px;width:384px;height:29px;box-sizing:border-box;border:1.3px solid #2b2b2b;border-radius:5px;background:#fff"></div>
<div class="t " style="left:19.5px;top:177.0px;font-size:16px;line-height:20px;font-weight:normal;color:#8a8a8a;">Typ Filtertext</div>
<svg style="position:absolute;left:399.0px;top:176.5px" width="20" height="20" viewBox="0 0 20 20"><path d="M15.5 10a5.5 5.5 0 1 1-2-4.3" fill="none" stroke="#2f86d1" stroke-width="1.6"/><path d="M12 3l5 1-2 4z" fill="#2f86d1"/></svg>
<div style="position:absolute;left:3px;top:208px;width:429px;height:1305px;box-sizing:border-box;border:1.3px solid #2b2b2b;background:#fff"></div>
<svg style="position:absolute;left:4.0px;top:212.0px" width="20" height="20" viewBox="0 0 20 20"><polyline points="5.5,7.5 10,12 14.5,7.5" fill="none" stroke="#111" stroke-width="2"/></svg>
<svg style="position:absolute;left:22.0px;top:212.0px" width="20" height="20" viewBox="0 0 20 20"><path d="M1.5 10.5L7.5 5 12 4.5 18.5 10.5 12 16.5 7.5 16z" fill="#2f86d1"/><path d="M2 10.5H7.3L11.8 4.8M7.3 10.5L11.8 16.2" fill="none" stroke="#fff" stroke-width="1"/></svg>
<div class="t " style="left:45px;top:212.0px;font-size:16px;line-height:20px;font-weight:normal;color:#000;">Untitled.mph <i>(root)</i></div>
<svg style="position:absolute;left:22.0px;top:237.0px" width="20" height="20" viewBox="0 0 20 20"><polyline points="5.5,7.5 10,12 14.5,7.5" fill="none" stroke="#111" stroke-width="2"/></svg>
<svg style="position:absolute;left:40.0px;top:237.0px" width="20" height="20" viewBox="0 0 20 20"><circle cx="10" cy="10" r="7" fill="none" stroke="#2f86d1" stroke-width="1.2"/><ellipse cx="10" cy="10" rx="3" ry="7" fill="none" stroke="#2f86d1" stroke-width="1"/><path d="M3 10h14M4.5 6.5h11M4.5 13.5h11" stroke="#2f86d1" stroke-width="1"/></svg>
<div class="t " style="left:63px;top:237.0px;font-size:16px;line-height:20px;font-weight:normal;color:#000;">Globale Definitionen</div>
<svg style="position:absolute;left:58.0px;top:262.0px" width="20" height="20" viewBox="0 0 20 20"><text x="2" y="15" font-family="Liberation Sans" font-size="13" fill="#2f86d1">P</text><rect x="12" y="7" width="1.4" height="8" fill="#2f86d1"/><rect x="12" y="4.5" width="1.4" height="1.4" fill="#2f86d1"/></svg>
<div class="t " style="left:81px;top:262.0px;font-size:16px;line-height:20px;font-weight:normal;color:#000;">Parameter 1</div>
<svg style="position:absolute;left:58.0px;top:287.0px" width="20" height="20" viewBox="0 0 20 20"><circle cx="10" cy="10" r="7.3" fill="none" stroke="#f0a030" stroke-width="1.3"/><rect x="8.6" y="5" width="2.8" height="2.6" fill="#f0a030"/><rect x="5.4" y="8.4" width="2.8" height="2.6" fill="#f0a030"/><rect x="8.6" y="8.4" width="2.8" height="2.6" fill="#e88a2a"/><rect x="11.8" y="8.4" width="2.8" height="2.6" fill="#f0a030"/><rect x="5.4" y="11.8" width="2.8" height="2.6" fill="#f0a040"/><rect x="8.6" y="11.8" width="2.8" height="2.6" fill="#c86a20"/><rect x="11.8" y="11.8" width="2.8" height="2.6" fill="#d07a28"/></svg>
<div class="t " style="left:81px;top:287.0px;font-size:16px;line-height:20px;font-weight:normal;color:#000;">Materialien</div>
<svg style="position:absolute;left:22.0px;top:312.0px" width="20" height="20" viewBox="0 0 20 20"><polyline points="5.5,7.5 10,12 14.5,7.5" fill="none" stroke="#111" stroke-width="2"/></svg>
<svg style="position:absolute;left:40.0px;top:312.0px" width="20" height="20" viewBox="0 0 20 20"><path d="M4 6l3-3h10v11l-3 3H4z" fill="#2f86d1"/><path d="M4 6h10v11M14 6l3-3" fill="none" stroke="#8fc0ea" stroke-width="1"/></svg>
<div class="t " style="left:63px;top:312.0px;font-size:16px;line-height:20px;font-weight:normal;color:#000;">Komponente 1 <i>(comp1)</i></div>
<svg style="position:absolute;left:40.0px;top:337.0px" width="20" height="20" viewBox="0 0 20 20"><polyline points="7.5,5.5 12,10 7.5,14.5" fill="none" stroke="#111" stroke-width="2"/></svg>
<svg style="position:absolute;left:58.0px;top:337.0px" width="20" height="20" viewBox="0 0 20 20"><rect x="3" y="4" width="13" height="2.2" fill="#2f86d1"/><rect x="3" y="9" width="13" height="2.2" fill="#2f86d1"/><rect x="3" y="14" width="13" height="2.2" fill="#2f86d1"/></svg>
<div class="t " style="left:81px;top:337.0px;font-size:16px;line-height:20px;font-weight:normal;color:#000;letter-spacing:-0.282px;-webkit-text-stroke:0.3px #000;">Definitionen</div>
<svg style="position:absolute;left:40.0px;top:362.0px" width="20" height="20" viewBox="0 0 20 20"><polyline points="5.5,7.5 10,12 14.5,7.5" fill="none" stroke="#111" stroke-width="2"/></svg>
<svg style="position:absolute;left:58.0px;top:362.0px" width="20" height="20" viewBox="0 0 20 20"><rect x="2.5" y="2.5" width="15" height="15" fill="#fff" stroke="#45a845" stroke-width="1.1"/><path d="M5 17L10 4 15 17" fill="none" stroke="#e8742e" stroke-width="1.2"/><path d="M3 9c3 3 11 3 14 0" fill="none" stroke="#e8742e" stroke-width="1.1"/></svg>
<div class="t " style="left:81px;top:362.0px;font-size:16px;line-height:20px;font-weight:normal;color:#000;">Geometrie 1</div>
<svg style="position:absolute;left:76.0px;top:387.0px" width="20" height="20" viewBox="0 0 20 20"><rect x="9" y="9" width="3" height="3" fill="#e8742e"/></svg>
<div class="t " style="left:99px;top:387.0px;font-size:16px;line-height:20px;font-weight:normal;color:#000;">Punkt 1 <i>(pt1)</i></div>
<svg style="position:absolute;left:58.0px;top:412.0px" width="20" height="20" viewBox="0 0 20 20"><polyline points="5.5,7.5 10,12 14.5,7.5" fill="none" stroke="#111" stroke-width="2"/></svg>
<svg style="position:absolute;left:76.0px;top:412.0px" width="20" height="20" viewBox="0 0 20 20"><rect x="6" y="2" width="9" height="16" rx="2" fill="none" stroke="#888" stroke-width="1.1"/><path d="M1 9l6-2 13 5-6 2z" fill="#e8742e" opacity=".85"/></svg>
<div class="t " style="left:99px;top:412.0px;font-size:16px;line-height:20px;font-weight:normal;color:#000;letter-spacing:-0.304px;-webkit-text-stroke:0.3px #000;">Arbeitsebene 1 <i>(wp1)</i></div>
<svg style="position:absolute;left:76.0px;top:437.0px" width="20" height="20" viewBox="0 0 20 20"><polyline points="5.5,7.5 10,12 14.5,7.5" fill="none" stroke="#111" stroke-width="2"/></svg>
<svg style="position:absolute;left:94.0px;top:437.0px" width="20" height="20" viewBox="0 0 20 20"><rect x="2.5" y="2.5" width="15" height="15" fill="#fff" stroke="#45a845" stroke-width="1.1"/><path d="M5 17L10 4 15 17" fill="none" stroke="#e8742e" stroke-width="1.2"/><path d="M3 9c3 3 11 3 14 0" fill="none" stroke="#e8742e" stroke-width="1.1"/></svg>
<div class="t " style="left:117px;top:437.0px;font-size:16px;line-height:20px;font-weight:normal;color:#000;">Ebene Geometrie</div>
<svg style="position:absolute;left:112.0px;top:462.0px" width="20" height="20" viewBox="0 0 20 20"><rect x="2.5" y="2.5" width="15" height="15" fill="#fff" stroke="#45a845" stroke-width="1.1"/><rect x="5" y="6" width="10" height="8" fill="#ddd" stroke="#e8742e" stroke-width="1"/></svg>
<div class="t " style="left:135px;top:462.0px;font-size:16px;line-height:20px;font-weight:normal;color:#000;letter-spacing:-0.292px;-webkit-text-stroke:0.3px #000;">Rechteck 1 <i>(r1)</i></div>
<svg style="position:absolute;left:76.0px;top:487.0px" width="20" height="20" viewBox="0 0 20 20"><polyline points="7.5,5.5 12,10 7.5,14.5" fill="none" stroke="#111" stroke-width="2"/></svg>
<svg style="position:absolute;left:94.0px;top:487.0px" width="20" height="20" viewBox="0 0 20 20"><path d="M3 2v15h14" fill="none" stroke="#45a845" stroke-width="1"/><path d="M3 17h14" stroke="#d0306a" stroke-width="1.2"/><text x="6" y="11" font-family="Liberation Sans" font-size="8" fill="#999">xy</text></svg>
<div class="t " style="left:117px;top:487.0px;font-size:16px;line-height:20px;font-weight:normal;color:#000;letter-spacing:-0.292px;-webkit-text-stroke:0.3px #000;">Ansicht 2</div>
<svg style="position:absolute;left:76.0px;top:512.0px" width="20" height="20" viewBox="0 0 20 20"><rect x="2.5" y="2.5" width="15" height="15" fill="#f2a080" stroke="#45a845" stroke-width="1.1"/><path d="M5 6h10M5 12h10M8 6v8" stroke="#e8742e" stroke-width="1"/></svg>
<div class="t " style="left:99px;top:512.0px;font-size:16px;line-height:20px;font-weight:normal;color:#000;">Vereinigung bilden <i>(fin)</i></div>
<svg style="position:absolute;left:58.0px;top:537.0px" width="20" height="20" viewBox="0 0 20 20"><rect x="8" y="2" width="4" height="4" fill="#f0a030"/><rect x="3" y="7" width="4" height="4" fill="#f0a030"/><rect x="8" y="7" width="4" height="4" fill="#e8802a"/><rect x="13" y="7" width="4" height="4" fill="#f0a030"/><rect x="3" y="12" width="4" height="4" fill="#f4b04a"/><rect x="8" y="12" width="4" height="4" fill="#c86a20"/><rect x="13" y="12" width="4" height="4" fill="#f0a030"/></svg>
<div class="t " style="left:81px;top:537.0px;font-size:16px;line-height:20px;font-weight:normal;color:#000;letter-spacing:-0.285px;-webkit-text-stroke:0.3px #000;">Materialien</div>
<svg style="position:absolute;left:40.0px;top:562.0px" width="20" height="20" viewBox="0 0 20 20"><polyline points="5.5,7.5 10,12 14.5,7.5" fill="none" stroke="#111" stroke-width="2"/></svg>
<svg style="position:absolute;left:58.0px;top:562.0px" width="20" height="20" viewBox="0 0 20 20"><path d="M1 4.5h7M1 16.5h7" stroke="#8ab4dd" stroke-width="1"/><ellipse cx="9.5" cy="10.5" rx="2.6" ry="7" fill="#bfe0f8" stroke="#3a7ec8" stroke-width="1.1"/><path d="M12 5l6.5 5.5L12 16" fill="none" stroke="#8ab4dd" stroke-width="1"/></svg>
<div class="t " style="left:81px;top:562.0px;font-size:16px;line-height:20px;font-weight:normal;color:#000;">Geometrische Optik <i>(gop)</i></div>
<svg style="position:absolute;left:76.0px;top:587.0px" width="20" height="20" viewBox="0 0 20 20"><path d="M2 9.5h15a1.5 1.5 0 0 1 1.5 1.5v4.5a1.5 1.5 0 0 1-1.5 1.5H3a1.5 1.5 0 0 1-1.5-1.5z" fill="#2f86d1"/><rect x="9" y="6" width="9.5" height="5" rx="1.5" fill="#2f86d1"/><text x="1.5" y="9" font-family="Liberation Serif" font-size="8.5" font-weight="bold" fill="#111">D</text></svg>
<div class="t " style="left:99px;top:587.0px;font-size:16px;line-height:20px;font-weight:normal;color:#000;letter-spacing:-0.318px;-webkit-text-stroke:0.3px #000;">Eigenschaften des Mediums 1</div>
<svg style="position:absolute;left:76.0px;top:612.0px" width="20" height="20" viewBox="0 0 20 20"><rect x="1.5" y="6.5" width="17" height="10.5" rx="2.5" fill="#d8d8d8" stroke="#bbb" stroke-width=".8"/><rect x="4.5" y="11" width="14" height="6" rx="1" fill="#2f86d1"/><text x="1.5" y="9" font-family="Liberation Serif" font-size="8.5" font-weight="bold" fill="#111">D</text></svg>
<div class="t " style="left:99px;top:612.0px;font-size:16px;line-height:20px;font-weight:normal;color:#000;letter-spacing:-0.273px;-webkit-text-stroke:0.3px #000;">Materialdiskontinuität 1</div>
<svg style="position:absolute;left:76.0px;top:637.0px" width="20" height="20" viewBox="0 0 20 20"><path d="M1 4.5h7M1 16.5h7" stroke="#8ab4dd" stroke-width="1"/><ellipse cx="9.5" cy="10.5" rx="2.6" ry="7" fill="#bfe0f8" stroke="#3a7ec8" stroke-width="1.1"/><path d="M12 5l6.5 5.5L12 16" fill="none" stroke="#8ab4dd" stroke-width="1"/></svg>
<div class="t " style="left:99px;top:637.0px;font-size:16px;line-height:20px;font-weight:normal;color:#000;">Strahleigenschaften 1</div>
<svg style="position:absolute;left:76.0px;top:662.0px" width="20" height="20" viewBox="0 0 20 20"><rect x="2.5" y="4" width="15" height="12" rx="2" fill="#e0e0e0" stroke="#aaa" stroke-width="1"/><path d="M3 10h14" stroke="#777"/><path d="M3 3v3M17 3v3M3 14v3M17 14v3" stroke="#2f86d1" stroke-width="1.5"/></svg>
<div class="t " style="left:99px;top:662.0px;font-size:16px;line-height:20px;font-weight:normal;color:#000;">Freisetzung von Punkt 1</div>
<svg style="position:absolute;left:76.0px;top:687.0px" width="20" height="20" viewBox="0 0 20 20"><rect x="2" y="4" width="16" height="12" rx="2.5" fill="#ddd" stroke="#aaa" stroke-width="1"/><rect x="4" y="9" width="14" height="7" fill="#2f86d1"/></svg>
<div class="t " style="left:99px;top:687.0px;font-size:16px;line-height:20px;font-weight:normal;color:#000;letter-spacing:-0.364px;-webkit-text-stroke:0.3px #000;">Wand 1</div>
<div style="position:absolute;left:4.5px;top:709px;width:427px;height:24.5px;background:#17519c"></div>
<div style="position:absolute;left:6px;top:710.5px;width:424px;height:21.5px;box-sizing:border-box;border:1px dotted #7fa6d8"></div>
<svg style="position:absolute;left:58.0px;top:712.0px" width="20" height="20" viewBox="0 0 20 20"><path d="M10 3L18 17H2z" fill="#bbb" stroke="#ddd" stroke-width="1"/><path d="M6 10h8M4 13.5h12M10 3l-4 14M10 3l4 14" stroke="#e8e8e8" stroke-width=".7"/></svg>
<div class="t " style="left:81px;top:712.0px;font-size:16px;line-height:20px;font-weight:normal;color:#fff;">Netz 1</div>
<svg style="position:absolute;left:22.0px;top:737.0px" width="20" height="20" viewBox="0 0 20 20"><polyline points="5.5,7.5 10,12 14.5,7.5" fill="none" stroke="#111" stroke-width="2"/></svg>
<svg style="position:absolute;left:40.0px;top:737.0px" width="20" height="20" viewBox="0 0 20 20"><circle cx="9" cy="10" r="2.6" fill="none" stroke="#2aa0b8" stroke-width="1.3"/><circle cx="15" cy="10" r="2.6" fill="none" stroke="#2aa0b8" stroke-width="1.3"/><path d="M1 10c2-4 3 2 5 0" fill="none" stroke="#2aa0b8" stroke-width="1.3"/></svg>
<div class="t " style="left:63px;top:737.0px;font-size:16px;line-height:20px;font-weight:normal;color:#000;">Studie 1</div>
<svg style="position:absolute;left:58.0px;top:762.0px" width="20" height="20" viewBox="0 0 20 20"><path d="M3 2v15h15" fill="none" stroke="#888" stroke-width="1"/><circle cx="10" cy="11" r="2" fill="#f0a030"/><path d="M10 6v2M6 11h2M12 11h2M7 8l1 1M13 8l-1 1" stroke="#f0a030" stroke-width="1"/><path d="M5 9c2-6 8-6 11 0" fill="none" stroke="#6ab0d8" stroke-width="1"/></svg>
<div class="t " style="left:81px;top:762.0px;font-size:16px;line-height:20px;font-weight:normal;color:#000;">Schritt 1: Raytracing</div>
<svg style="position:absolute;left:40.0px;top:787.0px" width="20" height="20" viewBox="0 0 20 20"><polyline points="7.5,5.5 12,10 7.5,14.5" fill="none" stroke="#111" stroke-width="2"/></svg>
<svg style="position:absolute;left:58.0px;top:787.0px" width="20" height="20" viewBox="0 0 20 20"><path d="M3 3v15M8 7v11M13 11v7" stroke="#888" stroke-width="1.1"/><rect x="3" y="2" width="4" height="3" fill="#2a9ac0"/><rect x="8" y="6" width="4" height="3" fill="#2a9ac0"/><rect x="13" y="10" width="4" height="3" fill="#2a9ac0"/></svg>
<div class="t " style="left:81px;top:787.0px;font-size:16px;line-height:20px;font-weight:normal;color:#000;">Löserkonfigurationen</div>
<svg style="position:absolute;left:22.0px;top:812.0px" width="20" height="20" viewBox="0 0 20 20"><polyline points="7.5,5.5 12,10 7.5,14.5" fill="none" stroke="#111" stroke-width="2"/></svg>
<svg style="position:absolute;left:40.0px;top:812.0px" width="20" height="20" viewBox="0 0 20 20"><rect x="6" y="3" width="12" height="10" fill="none" stroke="#999" stroke-width="1.1"/><rect x="4" y="5" width="12" height="10" fill="#fff" stroke="#999" stroke-width="1.1"/><rect x="2" y="7" width="12" height="10" fill="#fff" stroke="#999" stroke-width="1.1"/><rect x="5" y="10" width="6" height="5" fill="#c040a0"/></svg>
<div class="t " style="left:63px;top:812.0px;font-size:16px;line-height:20px;font-weight:normal;color:#000;">Ergebnisse</div>
<div style="position:absolute;left:439px;top:101px;width:620px;height:1415px;box-sizing:border-box;border:1.3px solid #2b2b2b;border-radius:7px 7px 1px 1px;background:#f8f9fd"></div>
<svg style="position:absolute;left:439px;top:101px;" width="156" height="35" viewBox="0 0 156 35"><path d="M1.3 7 Q1.3 1.3 7 1.3 L110 1.3 L124.96000000000001 5.76 L140.8 24.96 L154 32 L1.3 34z" fill="#d9e8f6"/></svg>
<svg style="position:absolute;left:547px;top:101px;" width="48" height="34" viewBox="0 0 48 34"><path d="M0 1 C7.92 1 11.440000000000001 2 14.96 5.76 L30.799999999999997 24.96 C35.2 30.4 39.6 32.5 48 32.5" fill="none" stroke="#2b2b2b" stroke-width="1.3"/></svg>
<div style="position:absolute;left:593px;top:133px;width:465px;height:1.3px;background:#2b2b2b"></div>
<div style="position:absolute;left:440.3px;top:133.8px;width:617.4px;height:1380.9px;box-sizing:border-box;border:2.5px solid #dcebf9"></div>
<svg style="position:absolute;left:440.8px;top:107.7px" width="20" height="20" viewBox="0 0 20 20"><rect x="4" y="2.5" width="12" height="15" rx="1" fill="#fff" stroke="#888" stroke-width="1"/><path d="M4 5.5h12M4 10h12M4 12h12" stroke="#999" stroke-width="1"/><path d="M7 8h6M7 15h6" stroke="#2f86d1" stroke-width="1.2"/></svg>
<div class="t " style="left:463.8px;top:107.7px;font-size:16px;line-height:20px;font-weight:normal;color:#000;letter-spacing:-0.098px;">Einstellungen</div>
<div style="position:absolute;left:1003.7px;top:112.4px;width:10px;height:4px;box-sizing:border-box;border:1.5px solid #111;border-radius:1px"></div>
<div style="position:absolute;left:1030.7px;top:112.2px;width:10px;height:9.8px;box-sizing:border-box;border:1.5px solid #111;border-radius:1px"></div>
<div style="position:absolute;left:1031.7px;top:114.4px;width:8px;height:1.3px;background:#111"></div>
<div class="t " style="left:445px;top:136.2px;font-size:16px;line-height:20px;font-weight:normal;color:#000;letter-spacing:-0.425px;">Netz</div>
<svg style="position:absolute;left:445.2px;top:162.0px" width="20" height="20" viewBox="0 0 20 20"><rect x="3" y="3" width="14" height="14" rx="2" fill="#8a8a8a"/><path d="M3 8h14M3 12.5h14M8 3v14M12.5 3v14" stroke="#d0d0d0" stroke-width="1"/></svg>
<div class="t " style="left:476px;top:162.0px;font-size:16px;line-height:20px;font-weight:normal;color:#000;letter-spacing:-0.203px;">Erzeuge alles</div>
<div style="position:absolute;left:443px;top:189.5px;width:612px;height:1px;background:#d9d9d9"></div>
<div class="t " style="left:452.9px;top:207.7px;font-size:16px;line-height:20px;font-weight:normal;color:#000;letter-spacing:-0.466px;">Label:</div>
<div style="position:absolute;left:499.4px;top:203.4px;width:546.2px;height:29.1px;box-sizing:border-box;border:1.3px solid #2b2b2b;border-radius:5px;background:#fff"></div>
<div class="t " style="left:508.7px;top:208.0px;font-size:16px;line-height:20px;font-weight:normal;color:#000;letter-spacing:-0.774px;">Netz 1</div>
<div style="position:absolute;left:447.7px;top:243.6px;width:603.1px;height:28px;box-sizing:border-box;border:1px solid #e4e6ea;border-bottom:none;border-radius:3px 3px 0 0;background:linear-gradient(#f9fafd,#f6f7fb)"></div>
<svg style="position:absolute;left:453px;top:251.6px;" width="10" height="10" viewBox="0 0 10 10"><path d="M1 3h8L5 8z" fill="#666"/></svg>
<div class="t b" style="left:468.2px;top:245.9px;font-size:16px;line-height:20px;font-weight:normal;color:#000;-webkit-text-stroke:0.3px #000;letter-spacing:0.249px;">Sequenztyp</div>
<div style="position:absolute;left:458.6px;top:276px;width:580.9999999999999px;height:35.19999999999999px;box-sizing:border-box;border:1.3px solid #2b2b2b;background:#fff"></div>
<div style="position:absolute;left:1004.5999999999999px;top:277px;width:34px;height:33.69999999999999px;box-sizing:border-box;border:1.3px solid #2b2b2b;border-radius:5px;background:#f8f9fd"></div>
<svg style="position:absolute;left:1012.1px;top:283.6px" width="20" height="20" viewBox="0 0 20 20"><polyline points="3.5,6.8 10,13 16.5,6.8" fill="none" stroke="#111" stroke-width="2.8"/></svg>
<div class="t " style="left:463.1px;top:283.6px;font-size:16px;line-height:20px;font-weight:normal;color:#000;letter-spacing:-0.052px;">Physik-gesteuertes Netz</div>
<div style="position:absolute;left:447.7px;top:328.6px;width:603.1px;height:28px;box-sizing:border-box;border:1px solid #e4e6ea;border-bottom:none;border-radius:3px 3px 0 0;background:linear-gradient(#f9fafd,#f6f7fb)"></div>
<svg style="position:absolute;left:453px;top:336.6px;" width="10" height="10" viewBox="0 0 10 10"><path d="M1 3h8L5 8z" fill="#666"/></svg>
<div class="t b" style="left:468.2px;top:330.9px;font-size:16px;line-height:20px;font-weight:normal;color:#000;-webkit-text-stroke:0.3px #000;letter-spacing:0.152px;">Physik-gesteuertes Netz</div>
<div class="t " style="left:458.6px;top:369.2px;font-size:16px;line-height:20px;font-weight:normal;color:#000;letter-spacing:-0.241px;">Elementgröße:</div>
<div style="position:absolute;left:566.4px;top:361.6px;width:473.19999999999993px;height:34.39999999999998px;box-sizing:border-box;border:1.3px solid #2b2b2b;background:#fff"></div>
<div style="position:absolute;left:1004.5999999999999px;top:362.6px;width:34px;height:32.89999999999998px;box-sizing:border-box;border:1.3px solid #2b2b2b;border-radius:5px;background:#f8f9fd"></div>
<svg style="position:absolute;left:1012.1px;top:368.8px" width="20" height="20" viewBox="0 0 20 20"><polyline points="3.5,6.8 10,13 16.5,6.8" fill="none" stroke="#111" stroke-width="2.8"/></svg>
<div class="t " style="left:570.9px;top:368.8px;font-size:16px;line-height:20px;font-weight:normal;color:#000;letter-spacing:-0.360px;">Normal</div>
<div style="position:absolute;left:463.2px;top:407.3px;width:571.5px;height:84.1px;background:#fff"></div>
<div style="position:absolute;left:464.5px;top:441px;width:489px;height:25px;background:#f1f1f1"></div>
<div style="position:absolute;left:953.4px;top:441px;width:80px;height:25px;background:#f8f9fc"></div>
<div style="position:absolute;left:464.5px;top:466px;width:569px;height:24.6px;background:#f1f1f1"></div>
<div style="position:absolute;left:463.2px;top:407.3px;width:571.5px;height:84.1px;box-sizing:border-box;border:1.3px solid #2b2b2b"></div>
<div style="position:absolute;left:463.2px;top:440px;width:571.5px;height:1.3px;background:#2b2b2b"></div>
<div style="position:absolute;left:953px;top:407.3px;width:1.3px;height:84.09999999999997px;background:#2b2b2b"></div>
<div class="t b" style="left:468.4px;top:413.9px;font-size:16px;line-height:20px;font-weight:bold;color:#a0a0a0;letter-spacing:-0.433px;">Beitragender</div>
<div class="t b" style="left:958.6px;top:413.9px;font-size:16px;line-height:20px;font-weight:bold;color:#a0a0a0;letter-spacing:-0.313px;">Verwende</div>
<div class="t " style="left:470.3px;top:443.8px;font-size:16px;line-height:20px;font-weight:normal;color:#000;letter-spacing:-0.087px;">Geometrische Analyse, Detailgröße</div>
<div class="t " style="left:470.3px;top:468.7px;font-size:16px;line-height:20px;font-weight:normal;color:#000;letter-spacing:-0.078px;">Geometrische Optik (gop)</div>
<svg style="position:absolute;left:982.3px;top:443.5px" width="20" height="20" viewBox="0 0 20 20"><rect x="3.5" y="4.5" width="12" height="12" fill="none" stroke="#2f86d1" stroke-width="1.3"/><path d="M6.5 10l3 3 7-8" fill="none" stroke="#2f86d1" stroke-width="1.4"/></svg>
<svg style="position:absolute;left:982.3px;top:468.5px" width="20" height="20" viewBox="0 0 20 20"><rect x="3.5" y="4.5" width="12" height="12" fill="none" stroke="#2f86d1" stroke-width="1.3"/><path d="M6.5 10l3 3 7-8" fill="none" stroke="#2f86d1" stroke-width="1.4"/></svg>
<div style="position:absolute;left:447.7px;top:507.8px;width:603.1px;height:28px;box-sizing:border-box;border:1px solid #e4e6ea;border-bottom:none;border-radius:3px 3px 0 0;background:linear-gradient(#f9fafd,#f6f7fb)"></div>
<svg style="position:absolute;left:453px;top:515.8px;" width="10" height="10" viewBox="0 0 10 10"><path d="M1 3h8L5 8z" fill="#666"/></svg>
<div class="t b" style="left:468.2px;top:510.1px;font-size:16px;line-height:20px;font-weight:normal;color:#000;-webkit-text-stroke:0.3px #000;letter-spacing:0.233px;">Information</div>
<div class="t " style="left:458.6px;top:539.9px;font-size:16px;line-height:20px;font-weight:normal;color:#000;letter-spacing:-0.142px;">Letzte Aufbauzeit: &lt; 1 Sekunde</div>
<div class="t " style="left:458.6px;top:563.5px;font-size:16px;line-height:20px;font-weight:normal;color:#000;letter-spacing:-0.328px;">Erzeuge mit: COMSOL 6.4.0.343 (glnxa64), Mar 27, 2026, 11:20:56 AM</div>
<div style="position:absolute;left:458.6px;top:597.5px;width:9.799999999999955px;height:1px;background:#d0d4da"></div>
<div style="position:absolute;left:609px;top:597.5px;width:430.5999999999999px;height:1px;background:#d0d4da"></div>
<div class="t " style="left:473.6px;top:587.9px;font-size:16px;line-height:20px;font-weight:normal;color:#000;letter-spacing:-0.069px;">Erstellte Elemente</div>
<div style="position:absolute;left:463.2px;top:617.7px;width:571.5px;height:58.9px;background:#fff"></div>
<div style="position:absolute;left:464.5px;top:651px;width:569px;height:24.6px;background:#f1f1f1"></div>
<div style="position:absolute;left:463.2px;top:617.7px;width:571.5px;height:58.9px;box-sizing:border-box;border:1.3px solid #2b2b2b"></div>
<div style="position:absolute;left:463.2px;top:650.3px;width:571.5px;height:1.3px;background:#2b2b2b"></div>
<div style="position:absolute;left:622px;top:617.7px;width:1.3px;height:58.89999999999998px;background:#2b2b2b"></div>
<div style="position:absolute;left:758.4px;top:617.7px;width:1.3px;height:58.89999999999998px;background:#2b2b2b"></div>
<div style="position:absolute;left:894.2px;top:617.7px;width:1.3px;height:58.89999999999998px;background:#2b2b2b"></div>
<div class="t b" style="left:469px;top:623.8px;font-size:16px;line-height:20px;font-weight:bold;color:#a0a0a0;letter-spacing:-0.419px;">Typ</div>
<div class="t b" style="left:627.4px;top:623.8px;font-size:16px;line-height:20px;font-weight:bold;color:#a0a0a0;letter-spacing:-0.768px;">Nummer</div>
<div class="t b" style="left:763.8px;top:623.8px;font-size:16px;line-height:20px;font-weight:bold;color:#a0a0a0;letter-spacing:-0.501px;">Qualität (min)</div>
<div class="t b" style="left:899.6px;top:623.8px;font-size:16px;line-height:20px;font-weight:bold;color:#a0a0a0;letter-spacing:-0.438px;">Qualität (avg)</div>
<div class="t " style="left:470.8px;top:653.6px;font-size:16px;line-height:20px;font-weight:normal;color:#000;letter-spacing:-0.229px;">Dreiecke</div>
<div class="t " style="left:628.7px;top:653.6px;font-size:16px;line-height:20px;font-weight:normal;color:#000;letter-spacing:0.035px;">988</div>
<div class="t " style="left:765px;top:653.6px;font-size:16px;line-height:20px;font-weight:normal;color:#000;letter-spacing:-0.468px;">0.674</div>
<div class="t " style="left:901px;top:653.6px;font-size:16px;line-height:20px;font-weight:normal;color:#000;letter-spacing:-0.108px;">0.938</div>
<div style="position:absolute;left:1063px;top:101px;width:1473px;height:1129px;box-sizing:border-box;border:1.3px solid #2b2b2b;border-radius:7px 7px 1px 1px;background:#f8f9fd"></div>
<svg style="position:absolute;left:1116px;top:101px;" width="48" height="34" viewBox="0 0 48 34"><path d="M0 1 C7.92 1 11.440000000000001 2 14.96 5.76 L30.799999999999997 24.96 C35.2 30.4 39.6 32.5 48 32.5" fill="none" stroke="#2b2b2b" stroke-width="1.3"/></svg>
<div style="position:absolute;left:1162px;top:133px;width:1373px;height:1.3px;background:#2b2b2b"></div>
<svg style="position:absolute;left:1064.6px;top:107.5px" width="20" height="20" viewBox="0 0 20 20"><circle cx="6" cy="10" r="4" fill="#2f86d1"/><path d="M13 6l-3 7h6z" fill="none" stroke="#bbb"/><rect x="12" y="5" width="2" height="2" fill="#2f86d1"/><rect x="9" y="12" width="2" height="2" fill="#2f86d1"/><rect x="15" y="12" width="2" height="2" fill="#2f86d1"/></svg>
<div class="t " style="left:1087.3px;top:107.5px;font-size:16px;line-height:20px;font-weight:normal;color:#000;">Grafik</div>
<div style="position:absolute;left:2480.5px;top:112.4px;width:10px;height:4px;box-sizing:border-box;border:1.5px solid #111;border-radius:1px"></div>
<div style="position:absolute;left:2507.5px;top:112.2px;width:10px;height:9.8px;box-sizing:border-box;border:1.5px solid #111;border-radius:1px"></div>
<div style="position:absolute;left:2508.5px;top:114.4px;width:8px;height:1.3px;background:#111"></div>
<div style="position:absolute;left:2000.6px;top:138.4px;width:25px;height:25px;box-sizing:border-box;border:1.3px solid #2b2b2b;border-radius:5px"></div>
<div style="position:absolute;left:2026.9px;top:138.4px;width:26px;height:25px;box-sizing:border-box;border:1.3px solid #2b2b2b;border-radius:5px"></div>
<svg style="position:absolute;left:1073.0px;top:140.6px" width="20" height="20" viewBox="0 0 20 20"><circle cx="8.5" cy="8.5" r="5.5" fill="none" stroke="#2f86d1" stroke-width="1.4"/><path d="M8.5 5.5v6M5.5 8.5h6M12.5 12.5l4.5 4.5" stroke="#2f86d1" stroke-width="1.6"/></svg>
<svg style="position:absolute;left:1100.0px;top:140.6px" width="20" height="20" viewBox="0 0 20 20"><circle cx="8.5" cy="8.5" r="5.5" fill="none" stroke="#2f86d1" stroke-width="1.4"/><path d="M5.5 8.5h6M12.5 12.5l4.5 4.5" stroke="#2f86d1" stroke-width="1.6"/></svg>
<svg style="position:absolute;left:1126.7px;top:140.6px" width="20" height="20" viewBox="0 0 20 20"><rect x="2" y="6" width="9" height="9" fill="none" stroke="#2f86d1" stroke-dasharray="1.5 1.5"/><circle cx="10" cy="8" r="4.5" fill="#fff" stroke="#2f86d1" stroke-width="1.4"/><path d="M10 5.5v5M7.5 8h5M13 11l4 4" stroke="#2f86d1" stroke-width="1.5"/></svg>
<svg style="position:absolute;left:1148.6px;top:140.6px" width="20" height="20" viewBox="0 0 20 20"><polyline points="5.5,7.5 10,12 14.5,7.5" fill="none" stroke="#111" stroke-width="2"/></svg>
<svg style="position:absolute;left:1171.3px;top:140.6px" width="20" height="20" viewBox="0 0 20 20"><rect x="5" y="5" width="10" height="10" fill="none" stroke="#888" stroke-width="1"/><path d="M10 7v6M7 10h6" stroke="#2f86d1" stroke-width="1.3"/><path d="M10 1l-2 2h4zM10 19l-2-2h4zM1 10l2-2v4zM19 10l-2-2v4z" fill="#2f86d1"/></svg>
<svg style="position:absolute;left:1198.0px;top:140.6px" width="20" height="20" viewBox="0 0 20 20"><rect x="2" y="2" width="16" height="16" fill="none" stroke="#777" stroke-width="1.2"/><path d="M10 5v10M5 10h10" stroke="#2f86d1" stroke-width="1.3"/><path d="M10 4l-2 2h4zM10 16l-2-2h4zM4 10l2-2v4zM16 10l-2-2v4z" fill="#2f86d1"/></svg>
<svg style="position:absolute;left:1219.7px;top:140.6px" width="20" height="20" viewBox="0 0 20 20"><line x1="10" y1="0" x2="10" y2="20" stroke="#d8d8d8" stroke-width="1"/></svg>
<svg style="position:absolute;left:1240.0px;top:140.6px" width="20" height="20" viewBox="0 0 20 20"><path d="M10 3v10" stroke="#3a9ad0" stroke-width="1.3"/><path d="M10 13l-6-4" stroke="#3aa83a" stroke-width="1.3"/><path d="M10 13l8-4" stroke="#e0306a" stroke-width="1.3"/></svg>
<svg style="position:absolute;left:1261.8px;top:140.6px" width="20" height="20" viewBox="0 0 20 20"><polyline points="5.5,7.5 10,12 14.5,7.5" fill="none" stroke="#111" stroke-width="2"/></svg>
<svg style="position:absolute;left:1285.0px;top:140.6px" width="20" height="20" viewBox="0 0 20 20"><path d="M4 2v15h13" fill="none" stroke="#3aa83a" stroke-width="1.1"/><path d="M4 17h13" stroke="#e0306a" stroke-width="1.2"/><text x="6" y="11" font-family="Liberation Sans" font-size="9" fill="#999">xy</text></svg>
<svg style="position:absolute;left:1312.2px;top:140.6px" width="20" height="20" viewBox="0 0 20 20"><path d="M4 2v15h13" fill="none" stroke="#3a9ad0" stroke-width="1.1"/><path d="M4 17h13" stroke="#3aa83a" stroke-width="1.2"/><text x="6" y="11" font-family="Liberation Sans" font-size="9" fill="#999">yz</text></svg>
<svg style="position:absolute;left:1339.3px;top:140.6px" width="20" height="20" viewBox="0 0 20 20"><path d="M4 2v15h13" fill="none" stroke="#3a9ad0" stroke-width="1.1"/><path d="M4 17h13" stroke="#e0306a" stroke-width="1.2"/><text x="6" y="11" font-family="Liberation Sans" font-size="9" fill="#999">xz</text></svg>
<svg style="position:absolute;left:1365.8px;top:140.6px" width="20" height="20" viewBox="0 0 20 20"><rect x="2" y="6" width="10" height="10" rx="1" fill="#2f86d1"/><path d="M12 9l5-3v10l-5-3z" fill="#2f86d1"/></svg>
<svg style="position:absolute;left:1386.5px;top:140.6px" width="20" height="20" viewBox="0 0 20 20"><line x1="10" y1="0" x2="10" y2="20" stroke="#d8d8d8" stroke-width="1"/></svg>
<svg style="position:absolute;left:1406.7px;top:140.6px" width="20" height="20" viewBox="0 0 20 20"><path d="M15.5 10a5.5 5.5 0 1 1-3-4.9" fill="none" stroke="#2f86d1" stroke-width="1.5"/><path d="M11 2l4 3-4 3z" fill="#2f86d1"/></svg>
<svg style="position:absolute;left:1428.6px;top:140.6px" width="20" height="20" viewBox="0 0 20 20"><polyline points="5.5,7.5 10,12 14.5,7.5" fill="none" stroke="#111" stroke-width="2"/></svg>
<svg style="position:absolute;left:1465.9px;top:140.6px" width="20" height="20" viewBox="0 0 20 20"><rect x="3" y="5" width="14" height="10" rx="3" fill="#2f86d1"/><ellipse cx="5" cy="10" rx="2" ry="5" fill="#6aaee6"/></svg>
<svg style="position:absolute;left:1487.8px;top:140.6px" width="20" height="20" viewBox="0 0 20 20"><polyline points="5.5,7.5 10,12 14.5,7.5" fill="none" stroke="#111" stroke-width="2"/></svg>
<svg style="position:absolute;left:1504.3px;top:140.6px" width="20" height="20" viewBox="0 0 20 20"><line x1="10" y1="0" x2="10" y2="20" stroke="#d8d8d8" stroke-width="1"/></svg>
<svg style="position:absolute;left:1524.8px;top:140.6px" width="20" height="20" viewBox="0 0 20 20"><rect x="3" y="3" width="14" height="14" fill="none" stroke="#2f86d1" stroke-dasharray="2 1.5" stroke-width="1.2"/><rect x="6" y="6" width="8" height="8" fill="#2f86d1"/></svg>
<svg style="position:absolute;left:1546.7px;top:140.6px" width="20" height="20" viewBox="0 0 20 20"><polyline points="5.5,7.5 10,12 14.5,7.5" fill="none" stroke="#111" stroke-width="2"/></svg>
<svg style="position:absolute;left:1569.8px;top:140.6px" width="20" height="20" viewBox="0 0 20 20"><rect x="3" y="3" width="14" height="14" fill="none" stroke="#2f86d1" stroke-dasharray="2 1.5" stroke-width="1.2"/><rect x="6" y="6" width="8" height="8" fill="none" stroke="#2f86d1" stroke-width="1.3"/></svg>
<svg style="position:absolute;left:1591.8px;top:140.6px" width="20" height="20" viewBox="0 0 20 20"><polyline points="5.5,7.5 10,12 14.5,7.5" fill="none" stroke="#111" stroke-width="2"/></svg>
<svg style="position:absolute;left:1614.9px;top:140.6px" width="20" height="20" viewBox="0 0 20 20"><rect x="2" y="2" width="14" height="14" fill="none" stroke="#2f86d1" stroke-dasharray="2 1.5" stroke-width="1.2"/><path d="M8 8l9 4-4 1-1 4z" fill="#2f86d1"/></svg>
<svg style="position:absolute;left:1641.7px;top:140.6px" width="20" height="20" viewBox="0 0 20 20"><rect x="6" y="3" width="12" height="12" fill="none" stroke="#2f86d1" stroke-dasharray="2 1.5" stroke-width="1.2"/><line x1="3" y1="1" x2="7" y2="11" stroke="#666" stroke-width="1.2"/><path d="M5 10l4-1 2 8-4 1z" fill="#f0a030"/></svg>
<svg style="position:absolute;left:1662.4px;top:140.6px" width="20" height="20" viewBox="0 0 20 20"><line x1="10" y1="0" x2="10" y2="20" stroke="#d8d8d8" stroke-width="1"/></svg>
<svg style="position:absolute;left:1682.7px;top:140.6px" width="20" height="20" viewBox="0 0 20 20"><path d="M2 10c4-5 12-5 16 0-4 5-12 5-16 0z" fill="none" stroke="#2f86d1" stroke-width="1.3"/><line x1="4" y1="16" x2="16" y2="4" stroke="#2f86d1" stroke-width="1.4"/></svg>
<svg style="position:absolute;left:1709.7px;top:140.6px" width="20" height="20" viewBox="0 0 20 20"><path d="M12 3a4 4 0 1 1-4 4" fill="none" stroke="#2f86d1" stroke-width="1.3"/><path d="M6 4l2 3 2-3z" fill="#2f86d1"/><ellipse cx="6" cy="15" rx="3.5" ry="2" fill="none" stroke="#2f86d1" stroke-width="1.1"/><ellipse cx="14" cy="15" rx="3.5" ry="2" fill="none" stroke="#2f86d1" stroke-width="1.1"/></svg>
<svg style="position:absolute;left:1736.4px;top:140.6px" width="20" height="20" viewBox="0 0 20 20"><rect x="2" y="3" width="16" height="14" fill="none" stroke="#2f86d1" stroke-width="1.2"/><line x1="2" y1="6" x2="18" y2="6" stroke="#2f86d1"/><path d="M4 11c3-4 9-4 12 0-3 4-9 4-12 0z" fill="#2f86d1"/><circle cx="10" cy="11" r="1.5" fill="#fff"/></svg>
<svg style="position:absolute;left:1759.0px;top:140.6px" width="20" height="20" viewBox="0 0 20 20"><polyline points="5.5,7.5 10,12 14.5,7.5" fill="none" stroke="#111" stroke-width="2"/></svg>
<svg style="position:absolute;left:1775.0px;top:140.6px" width="20" height="20" viewBox="0 0 20 20"><line x1="10" y1="0" x2="10" y2="20" stroke="#d8d8d8" stroke-width="1"/></svg>
<svg style="position:absolute;left:1795.0px;top:140.6px" width="20" height="20" viewBox="0 0 20 20"><path d="M3 6h10v11H3zM7 3h10v11H7zM3 6l4-3M13 6l4-3M3 17l4-3M13 17l4-3" fill="none" stroke="#777" stroke-width="1"/></svg>
<svg style="position:absolute;left:1818.0px;top:140.6px" width="20" height="20" viewBox="0 0 20 20"><polyline points="5.5,7.5 10,12 14.5,7.5" fill="none" stroke="#111" stroke-width="2"/></svg>
<svg style="position:absolute;left:1841.0px;top:140.6px" width="20" height="20" viewBox="0 0 20 20"><rect x="2" y="2" width="16" height="16" rx="3" fill="#eee" stroke="#999"/><path d="M5 8h3l5-3v10l-5-3H5z" fill="#2f86d1"/></svg>
<svg style="position:absolute;left:1862.6px;top:140.6px" width="20" height="20" viewBox="0 0 20 20"><polyline points="5.5,7.5 10,12 14.5,7.5" fill="none" stroke="#111" stroke-width="2"/></svg>
<svg style="position:absolute;left:1885.3px;top:140.6px" width="20" height="20" viewBox="0 0 20 20"><path d="M3 6h11v11H3z" fill="#9cc8ee" stroke="#2f86d1" stroke-width="1.2"/><path d="M3 6l3-3h11v11l-3 3M14 6l3-3" fill="none" stroke="#2f86d1" stroke-width="1.2"/></svg>
<svg style="position:absolute;left:1908.0px;top:140.6px" width="20" height="20" viewBox="0 0 20 20"><polyline points="5.5,7.5 10,12 14.5,7.5" fill="none" stroke="#111" stroke-width="2"/></svg>
<svg style="position:absolute;left:1930.8px;top:140.6px" width="20" height="20" viewBox="0 0 20 20"><path d="M3 6h11v11H3zM3 6l3-3h11v11l-3 3M14 6l3-3M6 3v11h11" fill="none" stroke="#2f86d1" stroke-width="1.2"/></svg>
<svg style="position:absolute;left:1957.5px;top:140.6px" width="20" height="20" viewBox="0 0 20 20"><rect x="2" y="2" width="16" height="16" rx="2" fill="#eee" stroke="#999"/><path d="M10 5v7" stroke="#3a9ad0" stroke-width="1.2"/><path d="M10 12l-5 3" stroke="#3aa83a" stroke-width="1.2"/><path d="M10 12l6 2" stroke="#e0306a" stroke-width="1.2"/></svg>
<svg style="position:absolute;left:1980.0px;top:140.6px" width="20" height="20" viewBox="0 0 20 20"><polyline points="5.5,7.5 10,12 14.5,7.5" fill="none" stroke="#111" stroke-width="2"/></svg>
<svg style="position:absolute;left:2002.6px;top:140.6px" width="20" height="20" viewBox="0 0 20 20"><rect x="3" y="3" width="14" height="14" fill="none" stroke="#2f86d1" stroke-width="1.2"/><path d="M3 7.7h14M3 12.3h14M7.7 3v14M12.3 3v14" stroke="#2f86d1" stroke-width="1"/></svg>
<svg style="position:absolute;left:2029.7px;top:140.6px" width="20" height="20" viewBox="0 0 20 20"><path d="M10 3L18 17H2z" fill="#e8f0f8" stroke="#3a8ad0" stroke-width="1.2"/><path d="M6 10h8M4 13.5h12M10 3l-4 14M10 3l4 14M6 10l6 7M14 10l-6 7" stroke="#3a8ad0" stroke-width=".6"/></svg>
<svg style="position:absolute;left:2050.6px;top:140.6px" width="20" height="20" viewBox="0 0 20 20"><line x1="10" y1="0" x2="10" y2="20" stroke="#d8d8d8" stroke-width="1"/></svg>
<svg style="position:absolute;left:2070.5px;top:140.6px" width="20" height="20" viewBox="0 0 20 20"><rect x="3" y="3" width="14" height="6" fill="#ccc"/><rect x="5" y="5" width="10" height="3" fill="#5a9ad0"/><circle cx="12" cy="14" r="3.5" fill="none" stroke="#e0306a" stroke-width="1.4"/><line x1="9.5" y1="16.5" x2="14.5" y2="11.5" stroke="#e0306a" stroke-width="1.4"/></svg>
<svg style="position:absolute;left:2098.0px;top:140.6px" width="20" height="20" viewBox="0 0 20 20"><path d="M10 2a8 8 0 1 0 0 16c2 0 1-3 3-3h3a2 2 0 0 0 2-3 8 8 0 0 0-8-10z" fill="#ddd" stroke="#999"/><circle cx="6" cy="9" r="1.5" fill="#e0306a"/><circle cx="9" cy="5.5" r="1.5" fill="#f0a030"/><circle cx="6.5" cy="13" r="1.5" fill="#3a9ad0"/></svg>
<svg style="position:absolute;left:2120.0px;top:140.6px" width="20" height="20" viewBox="0 0 20 20"><polyline points="5.5,7.5 10,12 14.5,7.5" fill="none" stroke="#111" stroke-width="2"/></svg>
<svg style="position:absolute;left:2136.3px;top:140.6px" width="20" height="20" viewBox="0 0 20 20"><line x1="10" y1="0" x2="10" y2="20" stroke="#d8d8d8" stroke-width="1"/></svg>
<svg style="position:absolute;left:2156.6px;top:140.6px" width="20" height="20" viewBox="0 0 20 20"><circle cx="10" cy="10" r="7.5" fill="#2f86d1"/><circle cx="10" cy="10" r="3" fill="#fff"/><path d="M10 2.5l1 5M17.5 10l-5 1M10 17.5l-1-5M2.5 10l5-1" stroke="#fff" stroke-width="1.3"/></svg>
<svg style="position:absolute;left:2179.0px;top:140.6px" width="20" height="20" viewBox="0 0 20 20"><polyline points="5.5,7.5 10,12 14.5,7.5" fill="none" stroke="#111" stroke-width="2"/></svg>
<svg style="position:absolute;left:2201.7px;top:140.6px" width="20" height="20" viewBox="0 0 20 20"><rect x="2" y="5" width="16" height="12" rx="1.5" fill="#2f86d1"/><rect x="7" y="3" width="6" height="3" fill="#2f86d1"/><circle cx="10" cy="11" r="3.5" fill="#fff"/><circle cx="10" cy="11" r="2" fill="#2f86d1"/></svg>
<svg style="position:absolute;left:2228.7px;top:140.6px" width="20" height="20" viewBox="0 0 20 20"><rect x="5" y="2" width="10" height="5" fill="#fff" stroke="#2f86d1" stroke-width="1.2"/><rect x="2" y="7" width="16" height="7" rx="1.5" fill="#2f86d1"/><rect x="5" y="12" width="10" height="6" fill="#fff" stroke="#2f86d1" stroke-width="1.2"/></svg>
<div style="position:absolute;left:1068px;top:168px;width:1463px;height:1px;background:#d6d6d6"></div>
<div style="position:absolute;left:1066px;top:169px;width:1467px;height:1058px;background:linear-gradient(180deg,#f8f9fe 0%,#e5f0fd 100%)"></div>
<svg style="position:absolute;left:2507.6px;top:176.7px" width="20" height="20" viewBox="0 0 20 20"><rect x="2" y="3" width="16" height="13" rx="3" fill="#1a5ab0"/><path d="M6 6l8 3.5-8 3.5z" fill="#f0e040"/></svg>
<svg style="position:absolute;left:0;top:0" width="2536" height="1542" viewBox="0 0 2536 1542"><line x1="1473.0" y1="262.0" x2="1473.0" y2="1065.0" stroke="#8e8e8e" stroke-width="1"/><line x1="1721.5" y1="230.0" x2="1721.5" y2="1024.0" stroke="#8e8e8e" stroke-width="1"/><line x1="1963.0" y1="200.0" x2="1963.0" y2="983.3" stroke="#8e8e8e" stroke-width="1"/><line x1="1473.0" y1="262.0" x2="2082.4" y2="184.2" stroke="#8e8e8e" stroke-width="1"/><line x1="1473.0" y1="463.5" x2="2082.4" y2="380.5" stroke="#8e8e8e" stroke-width="1"/><line x1="1473.0" y1="664.0" x2="2082.4" y2="575.9" stroke="#8e8e8e" stroke-width="1"/><line x1="1473.0" y1="864.0" x2="2082.4" y2="770.7" stroke="#8e8e8e" stroke-width="1"/><line x1="1473.0" y1="1064.8" x2="2082.4" y2="965.8" stroke="#8e8e8e" stroke-width="1"/><line x1="1500.3" y1="1101.6" x2="2107.3" y2="1000.8" stroke="#8e8e8e" stroke-width="1"/><line x1="1579.0" y1="1109.5" x2="2186.2" y2="1008.7" stroke="#8e8e8e" stroke-width="1"/><line x1="1660.2" y1="1117.4" x2="2265.1" y2="1016.2" stroke="#8e8e8e" stroke-width="1"/><line x1="1741.3" y1="1125.3" x2="2344.0" y2="1024.0" stroke="#8e8e8e" stroke-width="1"/><line x1="1820.2" y1="1133.6" x2="2423.8" y2="1031.5" stroke="#8e8e8e" stroke-width="1"/><line x1="1500.3" y1="1101.6" x2="1820.2" y2="1133.6" stroke="#8e8e8e" stroke-width="1"/><line x1="1745.7" y1="1060.5" x2="2065.7" y2="1092.0" stroke="#8e8e8e" stroke-width="1"/><line x1="1991.2" y1="1019.7" x2="2306.7" y2="1051.7" stroke="#8e8e8e" stroke-width="1"/><line x1="2129.0" y1="183.9" x2="2446.0" y2="207.6" stroke="#a8a8a8" stroke-width="1"/><line x1="2446.0" y1="207.6" x2="2443.6" y2="994.7" stroke="#a8a8a8" stroke-width="1"/><line x1="2424.0" y1="990.0" x2="2443.6" y2="994.7" stroke="#a8a8a8" stroke-width="1"/><line x1="2424.0" y1="404.0" x2="2445.0" y2="406.0" stroke="#a8a8a8" stroke-width="1"/><line x1="2424.0" y1="600.0" x2="2445.0" y2="602.0" stroke="#a8a8a8" stroke-width="1"/><line x1="2424.0" y1="797.0" x2="2445.0" y2="799.0" stroke="#a8a8a8" stroke-width="1"/><polygon points="2109,187 2426.5,210 2424,998 2108,968" fill="#d3d3d3"/><path d="M2183.0 464.7L2201.9 452.7M2388.8 358.9L2369.3 335.6M2183.5 491.9L2201.8 480.3M2127.3 929.8L2151.2 919.7M2201.1 829.9L2220.0 849.1M2300.2 910.7L2311.9 885.6M2165.1 340.6L2187.7 323.6M2108.1 863.9L2127.1 878.8M2425.0 682.8L2406.1 699.9M2425.3 577.7L2406.2 591.4M2219.7 359.4L2238.0 346.7M2425.7 472.7L2407.0 482.7M2238.8 700.0L2257.1 715.4M2387.2 713.0L2387.3 740.4M2126.8 691.3L2127.2 717.8M2238.4 727.1L2256.8 742.6M2153.1 972.3L2164.1 946.7M2294.4 582.7L2313.3 570.6M2127.2 717.8L2127.2 744.9M2275.8 594.4L2294.3 609.3M2346.5 279.5L2369.3 281.6M2332.6 450.1L2351.2 437.5M2164.3 477.1L2164.5 504.0M2313.8 461.8L2332.9 476.6M2369.3 281.6L2391.2 283.0M2299.5 961.8L2322.4 963.6M2201.6 345.5L2202.2 371.6M2332.2 858.8L2350.4 842.8M2322.4 963.6L2345.3 964.9M2219.7 739.0L2220.2 765.8M2369.4 724.9L2387.2 713.0M2256.3 274.6L2267.9 300.2M2289.0 886.2L2311.9 885.6M2127.1 772.0L2145.7 759.0M2146.2 461.7L2164.3 477.1M2220.2 765.8L2219.9 793.1M2388.4 494.6L2407.0 482.7M2257.1 606.6L2257.8 633.5M2279.3 275.6L2290.5 301.4M2209.9 950.6L2220.9 927.2M2125.7 474.4L2146.2 489.3M2164.1 747.3L2182.5 735.8M2146.2 489.3L2164.5 504.0M2257.8 633.5L2257.1 660.7M2406.8 893.3L2390.3 916.7M2232.6 954.0L2243.7 930.0M2130.6 970.1L2153.1 972.3M2201.9 615.7L2220.3 603.5M2183.8 356.0L2202.2 371.6M2295.4 500.7L2294.7 528.3M2108.1 915.9L2127.3 929.8M2108.9 291.1L2108.8 317.2M2238.8 483.2L2258.0 471.0M2332.2 367.3L2332.7 395.2M2108.2 811.8L2126.8 798.8M2108.3 707.7L2126.8 691.3M2424.8 735.3L2424.8 761.6M2425.5 525.2L2407.0 509.7M2425.8 420.1L2407.6 402.0M2426.2 315.1L2407.1 294.8M2127.1 878.8L2127.2 905.5M2350.6 737.0L2349.9 763.7M2164.4 639.6L2164.7 666.7M2108.9 265.1L2127.9 282.9M2201.8 507.5L2201.3 534.0M2201.3 534.0L2201.9 561.4M2331.8 721.6L2350.6 737.0M2331.7 748.2L2349.9 763.7M2239.3 401.7L2239.2 429.1M2369.2 588.3L2388.3 604.2M2187.8 220.2L2176.8 245.4M2369.8 615.6L2388.0 631.2M2256.8 796.5L2256.6 823.3M2152.2 294.3L2145.0 321.2M2126.7 664.4L2145.6 678.7M2198.3 976.6L2220.9 978.7M2145.3 651.2L2164.4 639.6M2294.5 663.6L2294.9 691.3M2387.7 767.1L2405.9 780.7M2367.8 966.6L2356.8 939.4M2108.8 369.2L2108.7 395.3M2182.8 518.8L2201.8 507.5M2332.1 531.5L2332.2 558.6M2332.2 558.6L2331.8 585.8M2370.0 398.3L2370.1 425.9M2239.4 374.8L2257.9 389.7M2220.4 413.6L2239.3 401.7M2370.1 425.9L2369.5 452.8M2387.7 767.1L2387.6 793.9M2256.7 769.7L2275.9 757.4M2238.1 781.3L2256.8 796.5M2387.6 793.9L2387.3 821.0M2295.0 637.0L2313.1 624.8M2276.1 648.9L2294.5 663.6M2187.8 220.2L2210.7 221.1M2332.3 503.7L2351.3 491.9M2300.9 327.3L2325.9 331.6M2313.4 515.9L2332.1 531.5M2152.2 294.3L2176.5 296.0M2369.9 370.8L2388.8 358.9M2369.1 778.7L2387.6 793.9M2367.8 966.6L2390.3 968.3M2301.8 276.5L2313.4 302.8M2333.6 889.0L2355.6 887.6M2127.2 825.1L2145.6 813.4M2387.9 549.2L2406.8 536.9M2147.5 839.6L2164.1 826.0M2324.4 277.4L2336.0 304.3M2255.0 957.3L2265.9 933.0M2265.9 933.0L2254.8 905.9M2127.7 852.2L2147.5 839.6M2424.5 840.4L2402.8 862.8M2163.8 801.5L2182.3 789.3M2424.8 735.3L2406.4 753.6M2146.1 543.5L2164.3 558.0M2276.9 960.1L2288.6 935.5M2153.1 972.3L2175.7 974.4M2201.7 669.4L2219.9 657.7M2183.0 410.9L2201.9 426.1M2201.6 696.8L2219.9 684.8M2238.9 536.9L2257.9 525.4M2426.1 341.3L2426.0 367.6M2239.1 564.2L2257.7 552.1M2425.4 551.5L2406.6 564.0M2425.8 446.4L2407.5 455.9M2108.3 759.7L2108.2 785.8M2276.4 431.6L2294.9 419.7M2146.0 352.9L2145.8 381.0M2182.5 708.6L2182.5 735.8M2331.4 693.9L2350.7 682.2M2164.4 720.3L2164.1 747.3M2220.7 576.3L2220.3 603.5M2369.1 561.5L2387.9 549.2M2201.8 588.5L2201.9 615.7M2350.4 573.2L2369.2 588.3M2233.4 222.7L2244.7 248.3M2265.9 933.0L2288.6 935.5M2238.9 455.6L2238.8 483.2M2199.7 297.4L2212.5 325.9M2388.7 413.9L2407.6 429.3M2151.2 919.7L2165.0 895.2M2127.2 717.8L2145.4 732.3M2388.8 440.8L2407.5 455.9M2220.9 978.7L2243.4 980.9M2145.4 732.3L2164.1 747.3M2165.1 340.6L2165.6 317.8M2294.7 718.4L2294.5 745.7M2164.5 693.8L2182.5 708.6M2425.0 682.8L2406.1 672.4M2245.1 196.9L2267.8 198.5M2425.3 577.7L2406.6 564.0M2108.7 395.3L2108.7 421.3M2182.7 600.3L2201.9 615.7M2378.9 993.7L2367.8 966.6M2331.8 585.8L2332.2 612.6M2201.9 561.4L2220.7 576.3M2425.8 420.1L2425.8 446.4M2238.4 727.1L2257.1 715.4M2220.3 467.8L2238.8 483.2M2108.2 785.8L2126.8 798.8M2239.2 429.1L2257.5 443.6M2108.4 681.6L2126.8 691.3M2256.6 823.3L2276.1 836.8M2238.8 754.5L2256.8 742.6M2108.2 837.8L2108.1 863.9M2388.8 440.8L2388.4 467.7M2275.8 594.4L2294.4 582.7M2368.3 860.8L2380.5 889.2M2369.4 479.6L2369.7 506.9M2294.9 691.3L2313.4 706.2M2425.9 393.9L2407.3 375.0M2275.7 621.4L2294.3 609.3M2426.2 288.8L2406.9 267.1M2406.1 699.9L2406.0 727.1M2313.8 461.8L2332.6 450.1M2314.2 489.2L2332.9 476.6M2108.9 239.1L2127.6 256.5M2347.5 328.3L2369.3 335.6M2369.5 452.8L2388.4 467.7M2279.3 275.6L2267.9 300.2M2300.2 910.7L2322.5 912.6M2390.4 231.2L2383.1 256.8M2146.2 489.3L2164.3 477.1M2350.5 355.0L2325.9 331.6M2388.3 604.2L2406.5 618.6M2232.6 954.0L2220.9 927.2M2143.5 214.5L2152.4 243.4M2276.2 512.9L2276.5 540.4M2357.8 306.1L2347.5 328.3M2183.8 356.0L2201.6 345.5M2108.1 915.9L2127.2 905.5M2313.8 380.1L2314.1 407.3M2310.9 937.4L2300.2 910.7M2183.5 383.4L2202.2 371.6M2201.6 723.8L2219.7 739.0M2388.0 631.2L2406.5 618.6M2201.0 750.8L2220.2 765.8M2239.2 618.6L2257.8 633.5M2108.4 629.6L2126.9 610.1M2126.9 610.1L2127.1 637.7M2108.6 525.4L2127.1 502.9M2276.1 485.7L2295.4 500.7M2164.7 368.4L2164.7 395.9M2311.2 353.2L2332.2 367.3M2146.3 408.0L2146.4 434.6M2279.3 275.6L2301.8 276.5M2183.0 762.7L2182.3 789.3M2331.7 748.2L2350.6 737.0M2163.9 774.4L2163.8 801.5M2232.6 954.0L2255.0 957.3M2220.1 630.9L2219.9 657.7M2331.3 775.9L2349.9 763.7M2369.8 615.6L2388.3 604.2M2199.0 873.3L2220.5 877.6M2279.5 224.6L2290.7 250.5M2310.9 937.4L2334.0 938.5M2257.9 498.3L2257.9 525.4M2368.9 643.1L2388.0 631.2M2387.7 767.1L2406.4 753.6M2244.9 299.4L2256.5 327.3M2145.8 381.0L2164.7 395.9M2387.6 793.9L2405.9 780.7M2367.9 914.4L2380.5 889.2M2108.9 239.1L2108.9 265.1M2220.9 927.2L2232.6 902.7M2126.8 798.8L2145.6 813.4M2267.8 198.5L2290.4 200.1M2312.7 760.2L2312.5 788.0M2183.5 654.2L2201.7 669.4M2425.8 446.4L2425.7 472.7M2238.1 781.3L2256.7 769.7M2350.8 627.5L2350.7 655.3M2220.4 522.2L2238.9 536.9M2238.2 807.9L2256.8 796.5M2108.1 863.9L2108.1 889.9M2276.1 648.9L2295.0 637.0M2294.5 745.7L2312.7 760.2M2275.8 675.8L2294.5 663.6M2313.4 515.9L2332.3 503.7M2294.3 772.2L2312.5 788.0M2201.9 426.1L2201.9 452.7M2332.2 612.6L2350.8 627.5M2313.5 543.4L2332.1 531.5M2332.2 639.5L2350.7 655.3M2220.0 820.0L2220.0 849.1M2351.4 410.1L2370.0 398.3M2369.7 506.9L2388.2 522.2M2257.2 687.9L2257.1 715.4M2324.4 277.4L2313.4 302.8M2238.8 700.0L2238.4 727.1M2176.8 245.4L2165.5 269.2M2146.1 543.5L2164.8 531.0M2294.7 555.1L2294.4 582.7M2387.3 658.6L2406.1 672.4M2276.9 960.1L2265.9 933.0M2145.3 570.0L2164.3 558.0M2183.0 410.9L2201.9 399.0M2294.4 582.7L2294.3 609.3M2128.0 309.5L2145.0 321.2M2387.5 685.7L2406.1 699.9M2332.6 422.7L2332.6 450.1M2108.2 837.8L2127.7 852.2M2183.1 438.0L2201.9 426.1M2201.6 777.9L2219.9 793.1M2333.7 989.4L2356.3 991.6M2332.6 450.1L2332.9 476.6M2349.8 790.7L2350.2 818.5M2425.4 551.5L2406.8 536.9M2201.4 804.8L2220.0 820.0M2425.8 446.4L2407.6 429.3M2239.1 645.9L2257.1 660.7M2108.6 525.4L2108.5 551.5M2350.2 818.5L2350.4 842.8M2239.0 672.8L2257.2 687.9M2387.5 685.7L2387.2 713.0M2276.1 836.8L2294.5 826.9M2108.4 655.6L2126.7 664.4M2108.5 551.5L2127.1 557.0M2276.5 540.4L2294.7 555.1M2426.3 262.5L2406.9 267.1M2404.0 946.3L2406.9 974.4M2313.4 706.2L2331.4 693.9M2314.1 407.3L2332.6 422.7M2331.3 802.7L2350.2 818.5M2313.1 733.4L2331.8 721.6M2324.4 277.4L2346.5 279.5M2350.4 573.2L2369.1 561.5M2313.6 434.9L2332.6 450.1M2368.6 670.6L2387.5 685.7M2350.9 600.2L2369.2 588.3M2276.9 960.1L2299.5 961.8M2331.1 829.8L2350.2 818.5M2242.5 878.3L2267.1 881.9M2145.4 732.3L2164.4 720.3M2233.1 273.7L2244.9 299.4M2368.7 697.1L2387.5 685.7M2267.1 881.9L2289.0 886.2M2146.4 434.6L2164.2 449.9M2182.7 600.3L2201.8 588.5M2187.4 948.2L2198.6 924.0M2386.9 846.1L2405.9 834.6M2108.0 968.0L2130.6 970.1M2220.3 467.8L2238.9 455.6M2108.2 785.8L2127.1 772.0M2108.4 681.6L2126.7 664.4M2368.3 860.8L2355.6 887.6M2238.1 833.2L2256.8 851.1M2258.4 361.9L2279.7 349.2M2276.2 703.5L2294.7 718.4M2233.4 222.7L2256.7 223.2M2127.7 852.2L2127.1 878.8M2275.5 730.0L2294.5 745.7M2313.3 570.6L2331.8 585.8M2199.7 297.4L2222.0 298.4M2164.3 612.6L2164.4 639.6M2313.4 598.0L2332.2 612.6M2151.2 919.7L2176.0 921.9M2294.5 826.9L2312.6 839.9M2201.8 480.3L2201.8 507.5M2351.4 465.1L2369.4 479.6M2238.0 346.7L2239.4 374.8M2369.3 281.6L2382.8 308.3M2368.3 860.8L2386.9 846.1M2145.2 596.9L2164.3 612.6M2239.4 374.8L2239.3 401.7M2256.8 742.6L2256.7 769.7M2165.3 218.2L2152.4 243.4M2183.0 464.7L2201.8 480.3M2256.7 769.7L2256.8 796.5M2164.7 395.9L2183.5 383.4M2391.2 283.0L2382.8 308.3M2294.3 609.3L2295.0 637.0M2388.8 358.9L2391.4 335.0M2199.7 193.6L2222.4 195.2M2145.4 624.5L2164.3 612.6M2183.5 491.9L2201.8 507.5M2295.0 637.0L2294.5 663.6M2387.3 740.4L2406.4 753.6M2345.3 964.9L2334.0 938.5M2332.9 476.6L2332.3 503.7M2426.0 367.6L2425.9 393.9M2332.2 858.8L2333.6 889.0M2219.7 359.4L2239.4 374.8M2332.3 503.7L2332.1 531.5M2108.2 785.8L2108.2 811.8M2108.5 551.5L2108.5 577.5M2369.9 370.8L2370.0 398.3M2401.4 995.9L2406.9 974.4M2387.3 740.4L2387.7 767.1M2369.9 370.8L2369.3 335.6M2201.7 642.6L2201.7 669.4M2143.5 214.5L2165.3 218.2M2181.3 845.4L2220.0 849.1M2403.8 208.4L2390.4 231.2M2313.1 201.8L2301.6 225.0M2369.4 724.9L2387.3 740.4M2301.6 225.0L2290.7 250.5M2350.7 655.3L2368.9 643.1M2369.3 752.4L2387.7 767.1M2276.1 404.9L2276.4 431.6M2345.3 964.9L2367.8 966.6M2267.9 300.2L2256.5 327.3M2424.1 971.7L2406.9 974.4M2145.6 786.3L2163.9 774.4M2350.5 355.0L2369.3 335.6M2290.5 301.4L2278.6 324.5M2293.9 799.7L2294.5 826.9M2220.9 927.2L2209.8 899.8M2126.8 798.8L2145.6 786.3M2145.6 813.4L2163.8 801.5M2183.5 654.2L2201.7 642.6M2331.6 667.2L2331.4 693.9M2243.7 930.0L2232.6 902.7M2183.0 681.8L2201.7 669.4M2220.4 522.2L2239.5 510.0M2331.4 693.9L2331.8 721.6M2369.8 534.3L2369.1 561.5M2108.2 811.8L2127.2 825.1M2108.3 707.7L2127.2 717.8M2425.5 525.2L2406.8 536.9M2425.8 420.1L2407.6 429.3M2426.2 315.1L2407.3 321.2M2220.6 548.8L2238.9 536.9M2369.1 561.5L2369.2 588.3M2406.9 267.1L2407.1 294.8M2258.1 417.0L2276.1 404.9M2407.1 294.8L2407.3 321.2M2279.5 224.6L2301.6 225.0M2294.3 772.2L2312.7 760.2M2127.2 905.5L2127.3 929.8M2275.6 784.5L2293.9 799.7M2301.6 225.0L2324.1 226.5M2244.9 299.4L2267.9 300.2M2164.7 666.7L2164.5 693.8M2312.9 651.5L2331.6 667.2M2267.9 300.2L2290.5 301.4M2187.8 220.2L2199.2 246.3M2351.2 519.6L2369.8 534.3M2220.9 927.2L2243.7 930.0M2201.9 561.4L2201.8 588.5M2210.7 221.1L2222.1 247.5M2152.2 294.3L2165.6 317.8M2145.3 651.2L2164.7 666.7M2387.5 685.7L2406.1 672.4M2239.2 429.1L2238.9 455.6M2176.5 296.0L2187.7 323.6M2424.2 919.2L2406.8 893.3M2367.8 966.6L2378.9 941.3M2145.6 678.7L2164.5 693.8M2182.8 518.8L2201.3 534.0M2164.2 449.9L2183.1 438.0M2222.4 195.2L2245.1 196.9M2201.4 804.8L2219.9 793.1M2182.9 545.9L2201.9 561.4M2220.4 712.2L2238.8 700.0M2425.9 393.9L2425.8 420.1M2220.4 413.6L2239.2 429.1M2108.3 759.7L2127.2 744.9M2108.4 655.6L2127.1 637.7M2108.5 551.5L2127.6 530.1M2426.0 367.6L2407.3 347.7M2108.2 811.8L2108.2 837.8M2127.1 878.8L2143.3 893.8M2426.3 262.5L2406.7 240.4M2125.8 205.0L2128.1 230.0M2146.2 461.7L2146.2 489.3M2424.5 840.4L2424.4 866.7M2276.5 567.6L2294.7 555.1M2146.2 489.3L2146.1 516.6M2295.5 473.7L2313.8 461.8M2127.2 905.5L2143.3 893.8M2108.8 369.2L2127.3 364.8M2313.6 434.9L2332.6 422.7M2183.8 356.0L2183.5 383.4M2312.6 839.9L2332.2 858.8M2128.0 309.5L2152.2 294.3M2201.6 723.8L2201.0 750.8M2350.3 709.4L2369.4 724.9M2239.2 591.2L2239.2 618.6M2346.7 228.1L2335.9 252.7M2368.9 805.9L2387.3 821.0M2276.3 458.9L2276.1 485.7M2313.4 302.8L2300.9 327.3M2265.9 933.0L2277.5 908.5M2290.4 200.1L2313.1 201.8M2127.3 364.8L2145.8 381.0M2288.6 985.1L2311.1 987.3M2425.7 472.7L2425.6 498.9M2311.2 353.2L2313.8 380.1M2201.8 507.5L2220.6 494.9M2288.6 935.5L2277.5 908.5M2331.8 721.6L2331.7 748.2M2201.6 696.8L2220.4 712.2M2108.6 473.4L2108.6 499.4M2406.9 974.4L2390.3 968.3M2182.5 735.8L2201.6 723.8M2220.3 603.5L2239.2 618.6M2331.7 748.2L2331.3 775.9M2369.2 588.3L2369.8 615.6M2239.1 564.2L2257.3 579.8M2424.2 919.2L2424.2 945.5M2275.5 730.0L2294.7 718.4M2258.0 471.0L2276.1 485.7M2369.8 615.6L2368.9 643.1M2407.3 321.2L2407.3 347.7M2276.4 431.6L2295.5 446.8M2313.4 598.0L2331.8 585.8M2407.3 347.7L2407.3 375.0M2294.5 826.9L2312.6 814.8M2313.1 624.8L2332.2 612.6M2233.1 273.7L2256.3 274.6M2351.4 465.1L2369.5 452.8M2346.7 228.1L2369.5 230.8M2351.3 491.9L2369.4 479.6M2381.1 206.7L2390.4 231.2M2313.4 302.8L2336.0 304.3M2290.4 200.1L2301.6 225.0M2244.7 248.3L2233.1 273.7M2256.7 223.2L2267.4 249.2M2387.3 740.4L2406.0 727.1M2256.8 851.1L2293.6 855.8M2222.0 298.4L2233.9 322.5M2165.0 895.2L2152.8 868.4M2332.2 858.8L2311.9 885.6M2378.9 993.7L2390.3 968.3M2176.0 921.9L2187.5 897.3M2351.5 383.1L2351.4 410.1M2369.1 778.7L2368.9 805.9M2238.8 754.5L2256.7 769.7M2128.1 230.0L2127.6 256.5M2425.6 498.9L2407.0 509.7M2425.9 393.9L2407.6 402.0M2275.7 621.4L2295.0 637.0M2426.2 288.8L2407.1 294.8M2127.6 256.5L2127.9 282.9M2164.5 504.0L2164.8 531.0M2314.2 489.2L2332.3 503.7M2146.1 543.5L2145.3 570.0M2244.7 248.3L2267.4 249.2M2202.2 371.6L2201.9 399.0M2108.7 395.3L2127.3 418.5M2350.5 355.0L2369.9 370.8M2183.0 410.9L2183.1 438.0M2332.7 395.2L2351.5 383.1M2212.5 325.9L2233.9 322.5M2369.3 752.4L2387.3 740.4M2201.6 777.9L2201.4 804.8M2424.1 971.7L2404.0 946.3M2335.8 203.4L2324.1 226.5M2311.9 885.6L2333.6 889.0M2245.1 196.9L2233.4 222.7M2349.9 763.7L2369.1 778.7M2154.4 190.3L2143.5 214.5M2165.0 895.2L2187.5 897.3M2350.5 355.0L2347.5 328.3M2239.1 645.9L2239.0 672.8M2152.4 243.4L2165.5 269.2M2357.8 306.1L2369.3 335.6M2382.8 308.3L2391.4 335.0M2293.6 855.8L2289.0 886.2M2146.1 516.6L2164.5 504.0M2310.9 937.4L2322.5 912.6M2183.5 383.4L2201.9 399.0M2388.0 631.2L2406.1 645.6M2313.1 201.8L2335.8 203.4M2334.0 938.5L2345.3 913.8M2311.1 987.3L2333.7 989.4M2333.7 989.4L2322.4 963.6M2182.3 789.3L2201.4 804.8M2108.6 499.4L2108.6 525.4M2219.9 657.7L2239.0 672.8M2108.4 629.6L2127.1 637.7M2108.6 525.4L2127.6 530.1M2332.2 367.3L2325.9 331.6M2424.2 945.5L2424.1 971.7M2388.0 631.2L2387.3 658.6M2275.6 784.5L2294.3 772.2M2257.9 525.4L2276.5 540.4M2426.1 341.3L2407.3 321.2M2275.9 811.2L2293.9 799.7M2406.8 893.3L2407.3 921.2M2312.9 651.5L2332.2 639.5M2145.4 732.3L2145.7 759.0M2295.0 392.6L2314.1 407.3M2312.8 678.7L2331.6 667.2M2351.2 519.6L2369.7 506.9M2182.7 600.3L2183.2 627.8M2331.3 775.9L2349.8 790.7M2210.7 221.1L2199.2 246.3M2350.7 546.5L2369.8 534.3M2406.9 267.1L2383.1 256.8M2220.3 467.8L2220.6 494.9M2311.2 353.2L2325.9 331.6M2368.9 643.1L2387.3 658.6M2256.6 823.3L2256.8 851.1M2176.5 296.0L2165.6 317.8M2290.7 250.5L2279.3 275.6M2145.6 678.7L2164.7 666.7M2294.9 691.3L2294.7 718.4M2387.6 793.9L2406.1 807.9M2390.3 968.3L2378.9 941.3M2276.2 703.5L2275.5 730.0M2146.0 705.6L2164.5 693.8M2182.9 545.9L2201.3 534.0M2387.3 821.0L2405.9 834.6M2378.9 993.7L2401.4 995.9M2313.3 570.6L2313.4 598.0M2209.8 899.8L2199.0 873.3M2183.0 573.6L2201.9 561.4M2220.8 440.8L2239.2 429.1M2425.2 604.0L2425.2 630.3M2369.5 452.8L2369.4 479.6M2238.2 807.9L2256.6 823.3M2387.3 821.0L2386.9 846.1M2108.5 577.5L2127.1 557.0M2126.8 798.8L2127.2 825.1M2404.0 946.3L2390.3 968.3M2275.8 675.8L2294.9 691.3M2210.7 221.1L2233.4 222.7M2312.6 839.9L2331.1 829.8M2164.3 558.0L2164.2 584.8M2313.5 543.4L2332.2 558.6M2176.5 296.0L2199.7 297.4M2350.3 709.4L2368.7 697.1M2127.1 878.8L2152.8 868.4M2351.4 410.1L2370.1 425.9M2256.5 327.3L2278.6 324.5M2351.2 437.5L2369.5 452.8M2368.9 805.9L2387.6 793.9M2128.1 230.0L2143.5 214.5M2355.6 887.6L2380.5 889.2M2267.8 198.5L2279.5 224.6M2176.8 245.4L2188.0 271.6M2209.8 899.8L2232.6 902.7M2127.3 364.8L2146.0 352.9M2368.3 833.6L2387.3 821.0M2145.3 570.0L2164.2 584.8M2127.6 392.0L2145.8 381.0M2177.0 191.9L2199.7 193.6M2424.6 814.1L2405.9 834.6M2183.1 438.0L2201.9 452.7M2164.7 368.4L2183.8 356.0M2220.3 603.5L2239.2 591.2M2378.9 941.3L2390.3 916.7M2127.2 905.5L2151.2 919.7M2258.0 471.0L2276.3 458.9M2356.3 991.6L2367.8 966.6M2276.1 836.8L2293.6 855.8M2145.8 381.0L2146.3 408.0M2313.4 706.2L2331.8 721.6M2164.1 747.3L2163.9 774.4M2313.1 733.4L2331.7 748.2M2381.1 206.7L2369.5 230.8M2290.4 200.1L2279.5 224.6M2201.9 615.7L2201.7 642.6M2350.9 600.2L2369.8 615.6M2183.5 654.2L2183.0 681.8M2331.1 829.8L2350.4 842.8M2238.8 483.2L2239.5 510.0M2256.7 223.2L2244.7 248.3M2220.4 522.2L2220.6 548.8M2335.9 252.7L2346.5 279.5M2368.7 697.1L2387.2 713.0M2279.7 349.2L2276.6 377.6M2222.0 298.4L2212.5 325.9M2424.2 945.5L2407.3 921.2M2164.8 531.0L2182.8 518.8M2294.5 745.7L2294.3 772.2M2386.9 846.1L2402.8 862.8M2176.0 921.9L2165.0 895.2M2243.4 980.9L2266.0 983.0M2145.7 759.0L2164.1 747.3M2294.3 772.2L2293.9 799.7M2201.9 399.0L2220.9 387.2M2198.6 924.0L2187.5 897.3M2332.2 612.6L2332.2 639.5M2425.1 656.5L2406.1 645.6M2108.7 421.3L2108.7 447.3M2183.2 627.8L2201.9 615.7M2130.6 970.1L2108.0 942.0M2332.2 639.5L2331.6 667.2M2425.6 498.9L2407.0 482.7M2424.4 866.7L2424.3 892.9M2220.6 494.9L2238.8 483.2M2258.4 361.9L2276.6 377.6M2311.1 987.3L2299.5 961.8M2369.7 506.9L2369.8 534.3M2220.9 978.7L2209.9 950.6M2425.2 630.3L2425.1 656.5M2368.3 860.8L2402.8 862.8M2406.7 240.4L2406.9 267.1M2108.5 603.5L2126.9 610.1M2108.6 499.4L2127.1 502.9M2108.7 395.3L2127.6 392.0M2256.7 223.2L2279.5 224.6M2275.9 757.4L2294.3 772.2M2222.0 298.4L2244.9 299.4M2349.9 763.7L2369.3 752.4M2109.0 187.0L2109.0 213.0M2220.0 849.1L2256.8 851.1M2152.4 243.4L2144.4 268.1M2349.8 790.7L2369.1 778.7M2176.0 921.9L2198.6 924.0M2165.3 218.2L2176.8 245.4M2198.6 924.0L2220.9 927.2M2382.8 308.3L2369.3 335.6M2293.6 855.8L2267.1 881.9M2164.7 395.9L2183.0 410.9M2334.0 938.5L2322.5 912.6M2145.4 624.5L2164.4 639.6M2127.5 445.2L2146.4 434.6M2164.9 422.8L2183.1 438.0M2182.3 789.3L2201.6 777.9M2345.3 964.9L2356.8 939.4M2356.8 939.4L2345.3 913.8M2331.3 802.7L2331.1 829.8M2332.2 858.8L2355.6 887.6M2182.4 816.9L2201.4 804.8M2219.9 657.7L2239.1 645.9M2368.6 670.6L2368.7 697.1M2219.9 684.8L2239.0 672.8M2257.9 525.4L2276.2 512.9M2131.7 188.6L2125.8 205.0M2407.6 402.0L2407.6 429.3M2220.9 387.2L2239.3 401.7M2257.7 552.1L2276.5 540.4M2295.0 392.6L2313.8 380.1M2407.6 429.3L2407.5 455.9M2146.4 434.6L2146.2 461.7M2294.9 419.7L2314.1 407.3M2152.4 243.4L2176.8 245.4M2357.8 306.1L2382.8 308.3M2163.8 801.5L2164.1 826.0M2312.5 788.0L2331.3 802.7M2313.1 201.8L2324.1 226.5M2311.2 353.2L2300.9 327.3M2201.7 669.4L2201.6 696.8M2301.6 225.0L2313.0 251.6M2350.7 655.3L2368.6 670.6M2334.0 938.5L2356.8 939.4M2201.6 696.8L2201.6 723.8M2238.9 536.9L2239.1 564.2M2324.1 226.5L2335.9 252.7M2256.8 851.1L2242.5 878.3M2267.9 300.2L2278.6 324.5M2127.7 852.2L2152.8 868.4M2145.6 786.3L2163.8 801.5M2239.1 564.2L2239.2 591.2M2387.3 821.0L2406.1 807.9M2290.5 301.4L2300.9 327.3M2145.6 813.4L2164.1 826.0M2276.4 431.6L2276.3 458.9M2164.2 584.8L2183.0 573.6M2406.9 267.1L2391.2 283.0M2243.7 930.0L2254.8 905.9M2266.0 983.0L2288.6 985.1M2183.0 681.8L2201.6 696.8M2294.5 826.9L2293.6 855.8M2201.9 452.7L2220.8 440.8M2108.7 447.3L2108.6 473.4M2220.6 548.8L2239.1 564.2M2128.0 309.5L2127.2 337.1M2109.0 213.0L2108.9 239.1M2424.3 892.9L2424.2 919.2M2220.7 576.3L2239.2 591.2M2258.1 417.0L2276.4 431.6M2145.2 596.9L2145.4 624.5M2257.5 443.6L2276.3 458.9M2127.6 256.5L2144.4 268.1M2183.0 464.7L2183.5 491.9M2183.5 491.9L2182.8 518.8M2279.7 349.2L2278.6 324.5M2351.2 437.5L2370.1 425.9M2219.7 359.4L2220.9 387.2M2358.5 205.1L2346.7 228.1M2267.8 198.5L2256.7 223.2M2350.4 842.8L2368.3 860.8M2238.4 727.1L2238.8 754.5M2199.2 246.3L2188.0 271.6M2238.8 754.5L2238.1 781.3M2424.2 919.2L2407.3 921.2M2222.1 247.5L2210.4 272.4M2275.8 594.4L2275.7 621.4M2424.6 814.1L2406.1 807.9M2127.1 502.9L2146.1 516.6M2164.2 449.9L2183.0 464.7M2275.7 621.4L2276.1 648.9M2313.8 461.8L2314.2 489.2M2378.9 941.3L2367.9 914.4M2127.2 337.1L2145.0 321.2M2164.3 477.1L2183.5 491.9M2356.3 991.6L2345.3 964.9M2181.3 845.4L2201.1 829.9M2220.4 712.2L2238.4 727.1M2128.1 230.0L2152.4 243.4M2201.7 642.6L2220.1 630.9M2314.2 489.2L2313.4 515.9M2201.6 345.5L2219.7 359.4M2108.3 759.7L2127.1 772.0M2239.5 510.0L2257.9 498.3M2350.5 355.0L2351.5 383.1M2369.4 724.9L2369.3 752.4M2426.0 367.6L2407.3 375.0M2219.7 739.0L2238.4 727.1M2198.3 976.6L2209.9 950.6M2369.3 752.4L2369.1 778.7M2276.6 377.6L2295.2 367.6M2407.5 455.9L2407.0 482.7M2276.5 567.6L2294.4 582.7M2257.1 606.6L2275.8 594.4M2295.5 473.7L2314.2 489.2M2407.0 482.7L2407.0 509.7M2176.8 245.4L2199.2 246.3M2108.8 369.2L2127.6 392.0M2199.2 246.3L2222.1 247.5M2165.6 317.8L2187.7 323.6M2335.9 252.7L2324.4 277.4M2346.7 228.1L2358.0 255.2M2369.5 230.8L2383.1 256.8M2313.4 302.8L2325.9 331.6M2164.4 639.6L2183.5 654.2M2336.0 304.3L2347.5 328.3M2388.8 386.8L2407.3 375.0M2277.5 908.5L2267.1 881.9M2293.6 855.8L2332.2 858.8M2201.8 507.5L2220.4 522.2M2288.6 935.5L2300.2 910.7M2182.5 735.8L2201.0 750.8M2127.3 364.8L2127.6 392.0M2109.0 187.0L2125.8 205.0M2108.5 603.5L2126.6 583.7M2108.6 499.4L2125.7 474.4M2406.1 645.6L2406.1 672.4M2425.6 498.9L2425.5 525.2M2127.6 392.0L2127.3 418.5M2145.3 651.2L2145.6 678.7M2256.8 796.5L2275.6 784.5M2335.9 252.7L2358.0 255.2M2275.9 757.4L2294.5 745.7M2313.1 624.8L2332.2 639.5M2257.9 498.3L2276.2 512.9M2145.6 678.7L2146.0 705.6M2182.8 518.8L2182.9 545.9M2294.5 663.6L2312.9 651.5M2108.7 421.3L2127.3 418.5M2108.8 317.2L2128.0 309.5M2351.3 491.9L2369.7 506.9M2295.2 367.6L2313.8 380.1M2182.9 545.9L2183.0 573.6M2332.1 531.5L2351.2 519.6M2325.9 331.6L2347.5 328.3M2220.4 413.6L2220.8 440.8M2370.0 398.3L2388.8 386.8M2244.7 248.3L2256.3 274.6M2277.5 908.5L2300.2 910.7M2238.1 781.3L2238.2 807.9M2164.9 422.8L2183.0 410.9M2276.1 648.9L2275.8 675.8M2165.0 895.2L2176.5 872.8M2356.3 991.6L2378.9 993.7M2127.1 557.0L2145.3 570.0M2275.8 675.8L2276.2 703.5M2164.1 826.0L2182.4 816.9M2313.4 515.9L2313.5 543.4M2187.5 897.3L2199.0 873.3M2381.1 206.7L2403.8 208.4M2313.5 543.4L2313.3 570.6M2220.9 387.2L2239.4 374.8M2425.3 577.7L2425.2 604.0M2219.9 793.1L2238.2 807.9M2351.4 410.1L2351.2 437.5M2402.8 862.8L2380.5 889.2M2257.1 660.7L2275.8 675.8M2368.9 805.9L2368.3 833.6M2165.3 218.2L2187.8 220.2M2312.5 788.0L2331.3 775.9M2294.7 528.3L2313.5 543.4M2312.6 814.8L2331.3 802.7M2332.7 395.2L2351.4 410.1M2324.1 226.5L2313.0 251.6M2350.7 682.2L2368.6 670.6M2335.8 203.4L2346.7 228.1M2220.3 603.5L2220.1 630.9M2245.1 196.9L2256.7 223.2M2154.4 190.3L2165.3 218.2M2125.8 205.0L2143.5 214.5M2258.0 471.0L2257.9 498.3M2293.6 855.8L2311.9 885.6M2146.1 516.6L2164.8 531.0M2407.1 294.8L2391.2 283.0M2424.3 892.9L2406.8 893.3M2424.7 787.9L2405.9 780.7M2313.4 706.2L2313.1 733.4M2322.5 912.6L2311.9 885.6M2182.5 708.6L2201.6 696.8M2333.7 989.4L2345.3 964.9M2425.1 656.5L2425.0 682.8M2350.4 573.2L2350.9 600.2M2220.7 576.3L2239.1 564.2M2257.5 443.6L2276.4 431.6M2426.1 341.3L2407.3 347.7M2426.4 236.3L2406.7 240.4M2127.9 282.9L2144.4 268.1M2275.9 811.2L2294.5 826.9M2127.5 445.2L2125.7 474.4M2324.1 226.5L2346.7 228.1M2279.7 349.2L2256.5 327.3M2406.0 727.1L2406.4 753.6M2164.5 693.8L2164.4 720.3M2312.8 678.7L2331.4 693.9M2290.5 301.4L2313.4 302.8M2350.4 842.8L2368.3 833.6M2294.7 718.4L2313.4 706.2M2108.7 447.3L2125.7 474.4M2404.0 946.3L2378.9 941.3M2108.8 343.2L2127.3 364.8M2144.4 268.1L2165.5 269.2M2220.0 849.1L2199.0 873.3M2350.7 546.5L2369.1 561.5M2243.7 930.0L2265.9 933.0M2331.8 585.8L2350.4 573.2M2369.3 335.6L2391.4 335.0M2199.7 193.6L2187.8 220.2M2290.7 250.5L2301.8 276.5M2322.5 912.6L2345.3 913.8M2127.1 502.9L2146.2 489.3M2258.4 361.9L2256.5 327.3M2313.0 251.6L2324.4 277.4M2146.0 705.6L2164.4 720.3M2407.3 921.2L2390.3 916.7M2127.6 530.1L2146.1 516.6M2164.3 477.1L2183.0 464.7M2209.8 899.8L2220.5 877.6M2183.0 573.6L2201.8 588.5M2164.5 504.0L2183.5 491.9M2127.6 256.5L2152.4 243.4M2232.6 902.7L2242.5 878.3M2220.8 440.8L2238.9 455.6M2202.2 371.6L2219.7 359.4M2403.8 208.4L2426.5 210.0M2288.6 985.1L2276.9 960.1M2407.3 321.2L2382.8 308.3M2198.3 976.6L2187.4 948.2M2108.5 577.5L2126.6 583.7M2108.6 473.4L2125.7 474.4M2238.0 346.7L2233.9 322.5M2257.1 715.4L2275.5 730.0M2183.5 383.4L2183.0 410.9M2164.7 395.9L2164.9 422.8M2201.0 750.8L2201.6 777.9M2182.3 789.3L2182.4 816.9M2239.2 618.6L2239.1 645.9M2369.5 230.8L2358.0 255.2M2350.6 737.0L2369.4 724.9M2219.9 657.7L2219.9 684.8M2368.3 833.6L2386.9 846.1M2276.1 485.7L2276.2 512.9M2164.4 639.6L2183.2 627.8M2336.0 304.3L2325.9 331.6M2257.9 525.4L2257.7 552.1M2188.0 271.6L2176.5 296.0M2140.8 946.0L2151.2 919.7M2127.6 392.0L2146.3 408.0M2165.1 340.6L2183.8 356.0M2295.0 392.6L2294.9 419.7M2164.7 368.4L2183.5 383.4M2127.3 418.5L2146.4 434.6M2109.0 187.0L2131.7 188.6M2201.3 534.0L2220.4 522.2M2183.0 762.7L2201.0 750.8M2426.3 262.5L2426.2 288.8M2331.3 775.9L2331.3 802.7M2239.3 401.7L2257.9 389.7M2108.1 915.9L2108.0 942.0M2220.1 630.9L2239.2 618.6M2108.4 681.6L2108.3 707.7M2368.9 643.1L2368.6 670.6M2257.9 498.3L2276.1 485.7M2407.3 375.0L2407.6 402.0M2295.2 367.6L2311.2 353.2M2369.5 230.8L2390.4 231.2M2336.0 304.3L2357.8 306.1M2188.0 271.6L2210.4 272.4M2312.7 760.2L2331.3 775.9M2288.6 935.5L2310.9 937.4M2350.8 627.5L2368.9 643.1M2424.2 945.5L2404.0 946.3M2222.4 195.2L2233.4 222.7M2131.7 188.6L2143.5 214.5M2346.5 279.5L2336.0 304.3M2279.7 349.2L2311.2 353.2M2164.8 531.0L2182.9 545.9M2127.1 557.0L2146.1 543.5M2187.5 897.3L2176.5 872.8M2358.0 255.2L2369.3 281.6M2145.7 759.0L2163.9 774.4M2299.5 961.8L2288.6 935.5M2126.6 583.7L2145.3 570.0M2201.9 399.0L2220.4 413.6M2198.6 924.0L2209.8 899.8M2424.4 866.7L2406.8 893.3M2424.8 761.6L2405.9 780.7M2425.1 656.5L2406.1 672.4M2183.2 627.8L2201.7 642.6M2164.3 558.0L2182.9 545.9M2201.9 426.1L2220.8 440.8M2426.5 210.0L2426.4 236.3M2219.9 793.1L2238.1 781.3M2220.6 494.9L2239.5 510.0M2311.1 987.3L2322.4 963.6M2220.0 820.0L2238.2 807.9M2220.9 978.7L2232.6 954.0M2257.1 660.7L2276.1 648.9M2406.8 536.9L2406.6 564.0M2127.9 282.9L2128.0 309.5M2257.2 687.9L2275.8 675.8M2294.7 528.3L2313.4 515.9M2257.9 389.7L2276.1 404.9M2145.3 570.0L2145.2 596.9M2294.7 555.1L2313.5 543.4M2183.1 438.0L2183.0 464.7M2332.6 422.7L2351.4 410.1M2164.2 449.9L2164.3 477.1M2233.9 322.5L2256.5 327.3M2201.4 804.8L2201.1 829.9M2349.8 790.7L2368.9 805.9M2187.5 897.3L2209.8 899.8M2109.0 213.0L2128.1 230.0M2239.0 672.8L2238.8 700.0M2350.2 818.5L2368.3 833.6M2276.5 540.4L2276.5 567.6M2127.2 744.9L2145.4 732.3M2177.0 191.9L2165.3 218.2M2388.4 467.7L2407.5 455.9M2127.5 445.2L2146.2 461.7M2276.5 567.6L2275.8 594.4M2164.4 720.3L2182.5 708.6M2314.1 407.3L2313.6 434.9M2356.8 939.4L2367.9 914.4M2335.8 203.4L2358.5 205.1M2182.4 816.9L2201.1 829.9M2108.1 889.9L2127.1 878.8M2131.7 188.6L2154.4 190.3M2201.8 588.5L2220.7 576.3M2424.9 709.1L2406.1 699.9M2313.6 434.9L2313.8 461.8M2425.2 604.0L2406.2 591.4M2425.5 525.2L2425.4 551.5M2219.9 684.8L2238.8 700.0M2426.2 288.8L2426.2 315.1M2331.1 829.8L2332.2 858.8M2238.9 455.6L2257.5 443.6M2266.0 983.0L2255.0 957.3M2175.7 974.4L2164.1 946.7M2257.7 552.1L2276.5 567.6M2108.3 707.7L2108.3 733.7M2368.7 697.1L2369.4 724.9M2257.3 579.8L2275.8 594.4M2294.9 419.7L2313.6 434.9M2108.7 447.3L2127.5 445.2M2108.8 343.2L2127.2 337.1M2295.5 446.8L2313.8 461.8M2127.9 282.9L2152.2 294.3M2256.8 851.1L2267.1 881.9M2258.4 361.9L2257.9 389.7M2145.0 321.2L2165.6 317.8M2313.0 251.6L2301.8 276.5M2275.5 730.0L2275.9 757.4M2404.0 946.3L2390.3 916.7M2164.2 584.8L2182.7 600.3M2127.1 637.7L2145.3 651.2M2388.8 358.9L2407.3 375.0M2313.4 598.0L2313.1 624.8M2232.6 902.7L2220.5 877.6M2164.3 612.6L2183.2 627.8M2201.9 452.7L2220.3 467.8M2313.1 624.8L2312.9 651.5M2254.8 905.9L2242.5 878.3M2351.4 465.1L2351.3 491.9M2201.8 480.3L2220.6 494.9M2220.0 849.1L2238.1 833.2M2351.3 491.9L2351.2 519.6M2238.0 346.7L2212.5 325.9M2238.0 346.7L2258.4 361.9M2257.1 715.4L2276.2 703.5M2388.8 358.9L2388.8 386.8M2424.6 814.1L2424.5 840.4M2276.2 512.9L2295.4 500.7M2406.2 591.4L2406.5 618.6M2127.2 337.1L2127.3 364.8M2256.8 742.6L2275.5 730.0M2406.5 618.6L2406.1 645.6M2313.8 380.1L2332.2 367.3M2181.3 845.4L2152.8 868.4M2290.7 250.5L2313.0 251.6M2407.3 321.2L2391.4 335.0M2145.4 624.5L2145.3 651.2M2294.3 609.3L2313.4 598.0M2279.7 349.2L2300.9 327.3M2313.0 251.6L2335.9 252.7M2358.5 205.1L2369.5 230.8M2332.9 476.6L2351.4 465.1M2424.0 998.0L2424.1 971.7M2278.6 324.5L2300.9 327.3M2219.7 359.4L2212.5 325.9M2220.0 849.1L2242.5 878.3M2199.2 246.3L2210.4 272.4M2232.6 902.7L2254.8 905.9M2220.9 387.2L2220.4 413.6M2222.1 247.5L2233.1 273.7M2254.8 905.9L2277.5 908.5M2127.3 418.5L2146.3 408.0M2388.2 522.2L2407.0 509.7M2163.9 774.4L2183.0 762.7M2201.7 642.6L2219.9 657.7M2143.3 893.8L2152.8 868.4M2358.5 205.1L2381.1 206.7M2332.2 858.8L2368.3 860.8M2239.5 510.0L2257.9 525.4M2425.2 630.3L2406.1 645.6M2201.6 345.5L2187.7 323.6M2425.4 551.5L2425.3 577.7M2108.0 968.0L2108.0 942.0M2219.7 739.0L2238.8 754.5M2127.1 502.9L2127.6 530.1M2147.5 839.6L2152.8 868.4M2276.6 377.6L2295.0 392.6M2220.2 765.8L2238.1 781.3M2127.6 530.1L2127.1 557.0M2257.1 606.6L2275.7 621.4M2145.6 786.3L2145.6 813.4M2276.1 404.9L2294.9 419.7M2257.8 633.5L2276.1 648.9M2145.6 813.4L2147.5 839.6M2293.9 799.7L2312.5 788.0M2140.8 946.0L2164.1 946.7M2312.7 760.2L2331.7 748.2M2295.4 500.7L2313.4 515.9M2183.0 681.8L2182.5 708.6M2331.6 667.2L2350.7 655.3M2183.8 356.0L2187.7 323.6M2350.8 627.5L2369.8 615.6M2332.2 367.3L2351.5 383.1M2220.6 548.8L2220.7 576.3M2222.4 195.2L2210.7 221.1M2369.8 534.3L2388.2 522.2M2258.1 417.0L2257.5 443.6M2358.0 255.2L2346.5 279.5M2424.4 866.7L2402.8 862.8M2257.5 443.6L2258.0 471.0M2424.8 761.6L2406.4 753.6M2383.1 256.8L2369.3 281.6M2388.8 386.8L2407.6 402.0M2275.6 784.5L2275.9 811.2M2277.5 908.5L2289.0 886.2M2387.2 713.0L2406.1 699.9M2201.9 426.1L2220.4 413.6M2126.8 691.3L2146.0 705.6M2275.9 811.2L2276.1 836.8M2312.9 651.5L2312.8 678.7M2401.4 995.9L2390.3 968.3M2164.7 666.7L2183.0 681.8M2312.8 678.7L2313.4 706.2M2201.1 829.9L2220.0 820.0M2300.2 910.7L2289.0 886.2M2351.2 519.6L2350.7 546.5M2108.4 629.6L2108.4 655.6M2108.1 863.9L2127.7 852.2M2425.7 472.7L2407.5 455.9M2238.8 700.0L2257.2 687.9M2350.7 546.5L2350.4 573.2M2388.8 386.8L2388.7 413.9M2257.9 389.7L2276.6 377.6M2243.4 980.9L2255.0 957.3M2256.8 796.5L2275.9 811.2M2388.7 413.9L2388.8 440.8M2153.1 972.3L2140.8 946.0M2294.5 663.6L2312.8 678.7M2108.7 421.3L2127.5 445.2M2406.1 672.4L2406.1 699.9M2108.8 317.2L2127.2 337.1M2332.1 531.5L2350.7 546.5M2220.4 712.2L2219.7 739.0M2358.0 255.2L2383.1 256.8M2109.0 213.0L2125.8 205.0M2350.2 818.5L2368.9 805.9M2332.2 558.6L2350.4 573.2M2370.0 398.3L2388.7 413.9M2406.7 240.4L2383.1 256.8M2370.1 425.9L2388.8 440.8M2256.3 274.6L2244.9 299.4M2146.2 461.7L2164.2 449.9M2267.4 249.2L2279.3 275.6M2295.5 473.7L2295.4 500.7M2387.6 576.8L2406.2 591.4M2209.9 950.6L2198.6 924.0M2125.7 474.4L2146.2 461.7M2164.1 826.0L2181.3 845.4M2350.3 709.4L2350.6 737.0M2407.1 294.8L2382.8 308.3M2387.6 576.8L2388.3 604.2M2257.3 579.8L2276.5 567.6M2127.1 557.0L2126.6 583.7M2239.2 591.2L2257.1 606.6M2388.3 604.2L2388.0 631.2M2405.9 834.6L2402.8 862.8M2295.5 446.8L2313.6 434.9M2126.6 583.7L2126.9 610.1M2147.5 839.6L2181.3 845.4M2276.3 458.9L2295.5 473.7M2402.8 862.8L2406.8 893.3M2312.6 814.8L2331.1 829.8M2165.1 340.6L2164.7 368.4M2108.9 265.1L2127.6 256.5M2293.6 855.8L2312.6 839.9M2256.3 274.6L2279.3 275.6M2350.7 682.2L2368.7 697.1M2182.5 735.8L2183.0 762.7M2356.8 939.4L2378.9 941.3M2331.8 721.6L2350.3 709.4M2209.9 950.6L2232.6 954.0M2369.2 588.3L2387.6 576.8M2144.4 268.1L2152.2 294.3M2176.5 872.8L2199.0 873.3M2127.1 637.7L2145.4 624.5M2388.8 358.9L2407.3 347.7M2165.5 269.2L2176.5 296.0M2127.2 337.1L2146.0 352.9M2164.3 612.6L2182.7 600.3M2126.7 664.4L2145.3 651.2M2146.0 352.9L2164.7 368.4M2424.7 787.9L2406.1 807.9M2322.5 912.6L2333.6 889.0M2182.5 708.6L2201.6 723.8M2201.8 480.3L2220.3 467.8M2295.2 367.6L2295.0 392.6M2345.3 913.8L2355.6 887.6M2426.4 236.3L2426.3 262.5M2239.4 374.8L2258.4 361.9M2108.4 655.6L2108.4 681.6M2127.2 744.9L2127.1 772.0M2425.0 682.8L2424.9 709.1M2127.1 772.0L2126.8 798.8M2407.3 347.7L2391.4 335.0M2164.8 531.0L2164.3 558.0M2294.7 718.4L2313.1 733.4M2220.0 849.1L2220.5 877.6M2201.9 399.0L2201.9 426.1M2331.8 585.8L2350.9 600.2M2351.5 383.1L2370.0 398.3M2199.7 193.6L2210.7 221.1M2219.9 793.1L2220.0 820.0M2369.1 778.7L2387.7 767.1M2369.4 479.6L2388.4 494.6M2257.1 660.7L2257.2 687.9M2301.8 276.5L2290.5 301.4M2127.6 530.1L2146.1 543.5M2154.4 190.3L2177.0 191.9M2294.7 528.3L2294.7 555.1M2255.0 957.3L2243.7 930.0M2164.5 504.0L2182.8 518.8M2424.5 840.4L2405.9 834.6M2424.8 735.3L2406.0 727.1M2426.2 315.1L2426.1 341.3M2425.2 630.3L2406.5 618.6M2332.7 395.2L2332.6 422.7M2202.2 371.6L2220.9 387.2M2288.6 985.1L2299.5 961.8M2108.8 317.2L2108.8 343.2M2108.3 733.7L2108.3 759.7M2349.9 763.7L2349.8 790.7M2220.2 765.8L2238.8 754.5M2108.3 733.7L2127.2 744.9M2424.8 761.6L2424.7 787.9M2276.1 404.9L2295.0 392.6M2257.8 633.5L2275.7 621.4M2238.0 346.7L2256.5 327.3M2407.0 509.7L2406.8 536.9M2387.3 658.6L2387.5 685.7M2146.1 516.6L2146.1 543.5M2130.6 970.1L2140.8 946.0M2295.4 500.7L2314.2 489.2M2222.1 247.5L2244.7 248.3M2181.3 845.4L2199.0 873.3M2407.3 921.2L2404.0 946.3M2332.2 367.3L2350.5 355.0M2187.7 323.6L2212.5 325.9M2108.9 291.1L2128.0 309.5M2301.8 276.5L2324.4 277.4M2350.6 737.0L2369.3 752.4M2143.3 893.8L2165.0 895.2M2233.4 222.7L2222.1 247.5M2255.0 957.3L2276.9 960.1M2188.0 271.6L2199.7 297.4M2199.7 297.4L2187.7 323.6M2220.5 877.6L2242.5 878.3M2126.8 691.3L2145.6 678.7M2388.7 413.9L2407.6 402.0M2210.4 272.4L2222.0 298.4M2151.2 919.7L2143.3 893.8M2164.7 666.7L2183.5 654.2M2127.2 717.8L2146.0 705.6M2201.3 534.0L2220.6 548.8M2146.3 408.0L2164.9 422.8M2388.8 440.8L2407.6 429.3M2165.1 340.6L2145.0 321.2M2164.1 946.7L2176.0 921.9M2183.0 762.7L2201.6 777.9M2164.5 693.8L2183.0 681.8M2239.3 401.7L2258.1 417.0M2243.4 980.9L2232.6 954.0M2220.1 630.9L2239.1 645.9M2201.9 561.4L2220.6 548.8M2127.3 418.5L2127.5 445.2M2239.2 429.1L2258.1 417.0M2256.6 823.3L2275.9 811.2M2146.0 705.6L2145.4 732.3M2294.9 691.3L2312.8 678.7M2146.0 352.9L2145.0 321.2M2127.2 825.1L2127.7 852.2M2403.8 208.4L2406.7 240.4M2183.0 573.6L2182.7 600.3M2332.2 558.6L2350.7 546.5M2164.2 584.8L2164.3 612.6M2220.8 440.8L2220.3 467.8M2370.1 425.9L2388.7 413.9M2108.9 239.1L2128.1 230.0M2201.9 452.7L2201.8 480.3M2238.2 807.9L2238.1 833.2M2369.5 452.8L2388.8 440.8M2267.4 249.2L2256.3 274.6M2127.3 929.8L2140.8 946.0M2387.6 576.8L2406.6 564.0M2346.5 279.5L2357.8 306.1M2388.3 604.2L2406.2 591.4M2257.1 715.4L2256.8 742.6M2299.5 961.8L2310.9 937.4M2126.6 583.7L2145.2 596.9M2322.4 963.6L2334.0 938.5M2164.3 558.0L2183.0 573.6M2126.9 610.1L2145.4 624.5M2175.7 974.4L2198.3 976.6M2201.6 723.8L2220.4 712.2M2108.5 577.5L2108.5 603.5M2220.0 820.0L2238.1 833.2M2201.0 750.8L2219.7 739.0M2108.8 343.2L2108.8 369.2M2239.2 591.2L2257.3 579.8M2351.2 437.5L2351.4 465.1M2257.2 687.9L2276.2 703.5M2239.2 618.6L2257.1 606.6M2424.7 787.9L2424.6 814.1M2276.3 458.9L2295.5 446.8M2368.3 833.6L2368.3 860.8M2406.8 893.3L2380.5 889.2M2406.7 240.4L2390.4 231.2M2294.7 555.1L2313.3 570.6M2276.1 485.7L2295.5 473.7M2406.6 564.0L2406.2 591.4M2294.4 582.7L2313.4 598.0M2332.6 422.7L2351.2 437.5M2267.4 249.2L2290.7 250.5M2332.6 450.1L2351.4 465.1M2165.5 269.2L2152.2 294.3M2239.5 510.0L2238.9 536.9M2279.5 224.6L2267.4 249.2M2146.0 352.9L2165.1 340.6M2127.2 744.9L2145.7 759.0M2177.0 191.9L2187.8 220.2M2388.4 467.7L2407.0 482.7M2276.6 377.6L2276.1 404.9M2244.9 299.4L2233.9 322.5M2145.8 381.0L2164.7 368.4M2127.1 772.0L2145.6 786.3M2164.4 720.3L2182.5 735.8M2388.4 494.6L2407.0 509.7M2313.1 733.4L2312.7 760.2M2345.3 913.8L2333.6 889.0M2164.1 747.3L2183.0 762.7M2108.1 889.9L2127.2 905.5M2201.8 588.5L2220.3 603.5M2424.9 709.1L2406.0 727.1M2425.2 604.0L2406.5 618.6M2367.9 914.4L2355.6 887.6M2350.9 600.2L2350.8 627.5M2201.9 615.7L2220.1 630.9M2238.9 455.6L2258.0 471.0M2388.4 467.7L2388.4 494.6M2424.0 998.0L2406.9 974.4M2266.0 983.0L2276.9 960.1M2175.7 974.4L2187.4 948.2M2238.8 483.2L2257.9 498.3M2256.8 851.1L2276.1 836.8M2388.4 494.6L2388.2 522.2M2125.7 474.4L2127.1 502.9M2279.7 349.2L2295.2 367.6M2406.4 753.6L2405.9 780.7M2145.7 759.0L2145.6 786.3M2294.5 745.7L2313.1 733.4M2165.5 269.2L2188.0 271.6M2351.5 383.1L2369.9 370.8M2183.2 627.8L2183.5 654.2M2332.2 612.6L2350.9 600.2M2220.6 494.9L2220.4 522.2M2332.2 639.5L2350.8 627.5M2369.4 479.6L2388.4 467.7M2345.3 913.8L2367.9 914.4M2369.7 506.9L2388.4 494.6M2367.9 914.4L2390.3 916.7M2257.9 389.7L2258.1 417.0M2387.3 658.6L2406.1 645.6M2275.9 757.4L2275.6 784.5M2254.8 905.9L2267.1 881.9M2401.4 995.9L2424.0 998.0M2108.0 942.0L2127.3 929.8M2108.2 837.8L2127.2 825.1M2108.3 733.7L2127.2 717.8M2201.6 777.9L2220.2 765.8M2108.5 603.5L2108.4 629.6M2127.1 637.7L2126.7 664.4M2239.1 645.9L2257.8 633.5M2276.2 512.9L2294.7 528.3M2126.7 664.4L2126.8 691.3M2256.8 742.6L2275.9 757.4M2239.0 672.8L2257.1 660.7M2313.8 380.1L2332.7 395.2M2181.3 845.4L2176.5 872.8M2256.7 769.7L2275.6 784.5M2164.9 422.8L2164.2 449.9M2294.3 609.3L2313.1 624.8M2276.5 540.4L2294.7 528.3M2108.9 291.1L2127.9 282.9M2295.0 637.0L2312.9 651.5M2182.4 816.9L2181.3 845.4M2332.9 476.6L2351.3 491.9M2314.1 407.3L2332.7 395.2M2331.3 802.7L2349.8 790.7M2332.3 503.7L2351.2 519.6M2219.9 684.8L2220.4 712.2M2368.6 670.6L2387.3 658.6M2369.9 370.8L2388.8 386.8M2257.7 552.1L2257.3 579.8M2210.4 272.4L2199.7 297.4M2146.3 408.0L2164.7 395.9M2257.3 579.8L2257.1 606.6M2294.9 419.7L2295.5 446.8M2388.2 522.2L2406.8 536.9M2233.1 273.7L2222.0 298.4M2164.1 946.7L2151.2 919.7M2146.4 434.6L2164.9 422.8M2127.2 825.1L2147.5 839.6M2163.9 774.4L2182.3 789.3M2295.5 446.8L2295.5 473.7M2387.9 549.2L2406.6 564.0M2187.4 948.2L2176.0 921.9M2312.5 788.0L2312.6 814.8M2390.3 916.7L2380.5 889.2M2108.9 265.1L2108.9 291.1M2163.8 801.5L2182.4 816.9M2312.6 814.8L2312.6 839.9M2350.7 655.3L2350.7 682.2M2201.6 345.5L2212.5 325.9M2403.8 208.4L2426.4 236.3M2424.9 709.1L2424.8 735.3M2201.7 669.4L2219.9 684.8M2350.7 682.2L2350.3 709.4M2238.1 833.2L2256.6 823.3M2388.2 522.2L2387.9 549.2M2238.9 536.9L2257.7 552.1M2108.1 889.9L2108.1 915.9M2387.9 549.2L2387.6 576.8M2276.2 703.5L2294.9 691.3M2405.9 780.7L2406.1 807.9M2293.9 799.7L2312.6 814.8M2406.1 807.9L2405.9 834.6M2313.3 570.6L2332.2 558.6M2108.0 942.0L2140.8 946.0M2331.6 667.2L2350.7 682.2M2210.4 272.4L2233.1 273.7M2331.4 693.9L2350.3 709.4M2369.8 534.3L2387.9 549.2M2164.1 946.7L2187.4 948.2M2369.1 561.5L2387.6 576.8M2187.4 948.2L2209.9 950.6M2369.3 281.6L2357.8 306.1M2145.2 596.9L2164.2 584.8M2383.1 256.8L2391.2 283.0M2387.2 713.0L2406.0 727.1M2152.8 868.4L2176.5 872.8M2322.4 963.6L2310.9 937.4M2126.9 610.1L2145.2 596.9" fill="none" stroke="#111" stroke-width="1.1"/><polygon points="2109,187 2426.5,210 2424,998 2108,968" fill="none" stroke="#000" stroke-width="2.2"/><rect x="1657.5" y="679.3" width="4.5" height="4.5" fill="#000"/></svg>
<div class="t " style="right:1075.3px;top:253.0px;font-size:16px;line-height:20px;font-weight:normal;color:#000;letter-spacing:0.282px;">-0.2</div>
<div class="t " style="right:1075.3px;top:453.7px;font-size:16px;line-height:20px;font-weight:normal;color:#000;letter-spacing:0.282px;">-0.1</div>
<div class="t " style="right:1075.3px;top:654.7px;font-size:16px;line-height:20px;font-weight:normal;color:#000;letter-spacing:1.102px;">0</div>
<div class="t " style="right:1075.3px;top:855.4px;font-size:16px;line-height:20px;font-weight:normal;color:#000;letter-spacing:0.319px;">0.1</div>
<div class="t " style="right:1075.3px;top:1055.7px;font-size:16px;line-height:20px;font-weight:normal;color:#000;letter-spacing:0.319px;">0.2</div>
<div class="t " style="left:1413.6px;transform:translateX(-50%);top:654.1px;font-size:14px;line-height:20px;font-weight:normal;color:#000;">m</div>
<div class="t " style="left:1487px;transform:translateX(-50%);top:1107.0px;font-size:16px;line-height:20px;font-weight:normal;color:#000;letter-spacing:0.282px;">-0.1</div>
<div class="t " style="left:1563.8px;transform:translateX(-50%);top:1116.2px;font-size:16px;line-height:20px;font-weight:normal;color:#000;letter-spacing:0.606px;">-0.05</div>
<div class="t " style="left:1650.2px;transform:translateX(-50%);top:1123.6px;font-size:16px;line-height:20px;font-weight:normal;color:#000;letter-spacing:1.102px;">0</div>
<div class="t " style="left:1726px;transform:translateX(-50%);top:1131.5px;font-size:16px;line-height:20px;font-weight:normal;color:#000;letter-spacing:0.540px;">0.05</div>
<div class="t " style="left:1808px;transform:translateX(-50%);top:1139.9px;font-size:16px;line-height:20px;font-weight:normal;color:#000;letter-spacing:0.353px;">0.1</div>
<div class="t " style="left:1829px;transform:translateX(-50%);top:1139.5px;font-size:16px;line-height:20px;font-weight:normal;color:#000;letter-spacing:1.102px;">0</div>
<div class="t " style="left:2079.7px;transform:translateX(-50%);top:1096.5px;font-size:16px;line-height:20px;font-weight:normal;color:#000;letter-spacing:0.019px;">0.2</div>
<div class="t " style="left:2319.9px;transform:translateX(-50%);top:1055.7px;font-size:16px;line-height:20px;font-weight:normal;color:#000;letter-spacing:0.019px;">0.4</div>
<div class="t " style="left:1624.3px;transform:translateX(-50%);top:1166.3px;font-size:14px;line-height:20px;font-weight:normal;color:#000;">m</div>
<div class="t " style="left:2157.7px;transform:translateX(-50%);top:1114.1px;font-size:14px;line-height:20px;font-weight:normal;color:#000;">m</div>
<svg style="position:absolute;left:1100px;top:1165px;" width="60" height="60" viewBox="0 0 60 60"><line x1="11" y1="17" x2="11" y2="40" stroke="#3aa83a" stroke-width="2"/><path d="M7 38l4 7 4-7z" fill="#3aa83a"/><line x1="11" y1="17" x2="30" y2="18" stroke="#e0306a" stroke-width="2.4"/><path d="M27 14l7 4-7 3z" fill="#e0306a"/><line x1="11" y1="17" x2="27" y2="15" stroke="#4a80d0" stroke-width="1.5"/></svg>
<div class="t " style="left:1133.6px;top:1168.5px;font-size:15px;line-height:20px;font-weight:normal;color:#000;">z</div>
<div class="t " style="left:1141.7px;top:1174.5px;font-size:15px;line-height:20px;font-weight:normal;color:#000;">x</div>
<div class="t " style="left:1111px;transform:translateX(-50%);top:1207.5px;font-size:15px;line-height:20px;font-weight:normal;color:#000;">y</div>
<div style="position:absolute;left:1063px;top:1234px;width:1473px;height:282px;box-sizing:border-box;border:1.3px solid #2b2b2b;border-radius:7px 7px 1px 1px;background:#f8f9fd"></div>
<svg style="position:absolute;left:1185.6px;top:1234px;" width="46.40000000000009" height="34" viewBox="0 0 46.40000000000009 34"><path d="M0 1 C7.632000000000016 1 11.024000000000024 2 14.416000000000032 5.76 L29.68000000000006 24.96 C33.92000000000007 30.4 38.16000000000008 32.5 46.40000000000009 32.5" fill="none" stroke="#2b2b2b" stroke-width="1.3"/></svg>
<div style="position:absolute;left:1230px;top:1266px;width:1305px;height:1.3px;background:#2b2b2b"></div>
<svg style="position:absolute;left:1065.0px;top:1241.0px" width="20" height="20" viewBox="0 0 20 20"><rect x="2" y="4.5" width="16" height="11" fill="none" stroke="#2f86d1" stroke-width="1.3"/><path d="M2 4.5l8 7 8-7M2 15.5l6-5M18 15.5l-6-5" fill="none" stroke="#2f86d1" stroke-width="1"/></svg>
<div class="t " style="left:1087.6px;top:1241.0px;font-size:16px;line-height:20px;font-weight:normal;color:#000;">Mitteilungen</div>
<svg style="position:absolute;left:1179.0px;top:1241.5px" width="20" height="20" viewBox="0 0 20 20"><path d="M5 5l10 10M15 5L5 15" stroke="#222" stroke-width="1.4"/></svg>
<svg style="position:absolute;left:1219.7px;top:1241.0px" width="20" height="20" viewBox="0 0 20 20"><rect x="1" y="7" width="18" height="6" rx="1" fill="#fff" stroke="#999"/><rect x="2" y="8" width="12" height="4" fill="#5ab050"/></svg>
<div class="t " style="left:1242.6px;top:1241.0px;font-size:16px;line-height:20px;font-weight:normal;color:#000;">Fortschritt</div>
<svg style="position:absolute;left:1320.9px;top:1241.0px" width="20" height="20" viewBox="0 0 20 20"><rect x="2" y="3" width="16" height="14" fill="none" stroke="#2f86d1" stroke-width="1.2"/><path d="M5 7v1M8 7v1M11 7v1M14 7v1M5 10v1M8 10v1M11 10v1M14 10v1M5 13v1M8 13v1M11 13v1M14 13v1" stroke="#2f86d1" stroke-width="1.3"/></svg>
<div class="t " style="left:1343.8px;top:1241.0px;font-size:16px;line-height:20px;font-weight:normal;color:#000;">Log</div>
<svg style="position:absolute;left:1307.7px;top:1234px;" width="12" height="33" viewBox="0 0 12 33"><path d="M0 1.2H4Q10 1.2 10 7V32" fill="none" stroke="#2b2b2b" stroke-width="1.2"/></svg>
<svg style="position:absolute;left:1362.3px;top:1234px;" width="12" height="33" viewBox="0 0 12 33"><path d="M0 1.2H4Q10 1.2 10 7V32" fill="none" stroke="#2b2b2b" stroke-width="1.2"/></svg>
<div style="position:absolute;left:2481px;top:1245.4px;width:10px;height:4px;box-sizing:border-box;border:1.5px solid #111;border-radius:1px"></div>
<div style="position:absolute;left:2508px;top:1245.2px;width:10px;height:9.8px;box-sizing:border-box;border:1.5px solid #111;border-radius:1px"></div>
<div style="position:absolute;left:2509px;top:1247.4px;width:8px;height:1.3px;background:#111"></div>
<svg style="position:absolute;left:1072.5px;top:1274.0px" width="20" height="20" viewBox="0 0 20 20"><line x1="6" y1="2" x2="11" y2="11" stroke="#666" stroke-width="1.3"/><path d="M9 10l5-1 3 8-5 1z" fill="#f0a030"/></svg>
<div style="position:absolute;left:1097.5px;top:1271.5px;width:25px;height:25px;box-sizing:border-box;border:1.3px solid #2b2b2b;border-radius:5px"></div>
<svg style="position:absolute;left:1100.0px;top:1274.0px" width="20" height="20" viewBox="0 0 20 20"><rect x="2" y="3" width="13" height="10" fill="none" stroke="#2f86d1" stroke-width="1.1"/><rect x="5" y="7" width="13" height="10" fill="#fff" stroke="#2f86d1" stroke-width="1.1"/><path d="M5 7l6.5 5 6.5-5" fill="none" stroke="#2f86d1" stroke-width="1"/></svg>
<div style="position:absolute;left:1066px;top:1301.5px;width:1466px;height:1px;background:#d6d6d6"></div>
<div class="t " style="left:1066.6px;top:1305.0px;font-size:16px;line-height:20px;font-weight:normal;color:#000;letter-spacing:-0.259px;">COMSOL Multiphysics 6.4.0.343</div>
<div class="t " style="left:1066.6px;top:1323.9px;font-size:16px;line-height:20px;font-weight:normal;color:#000;letter-spacing:-0.179px;">[27.03.2026, 10:59] Fertiggestellte Geometrie hat 1 Vertex.</div>
<div class="t " style="left:1066.6px;top:1342.9px;font-size:16px;line-height:20px;font-weight:normal;color:#000;letter-spacing:-0.198px;">[27.03.2026, 11:16] Erstellte Vereinigung für 1 Oberflächenobjekt und 1 Punktobjekt.</div>
<div class="t " style="left:1066.6px;top:1361.8px;font-size:16px;line-height:20px;font-weight:normal;color:#000;letter-spacing:-0.243px;">[27.03.2026, 11:16] Fertiggestellte Geometrie hat 1 Rand, 4 Kanten, und 5 Vertices.</div>
<div class="t " style="left:1066.6px;top:1380.8px;font-size:16px;line-height:20px;font-weight:normal;color:#000;letter-spacing:-0.140px;">[27.03.2026, 11:16] Fertiggestellte Geometrie ist nicht zusammenhängend und hat 2 Komponenten.</div>
<div class="t " style="left:1066.6px;top:1399.7px;font-size:16px;line-height:20px;font-weight:normal;color:#000;letter-spacing:-0.114px;">[27.03.2026, 11:20] Gesamtes Netz besteht aus 988 Oberflächenelementen und 86 Linienelementen.</div>
<div style="position:absolute;left:2157.4px;top:1517px;width:1px;height:20px;background:#dcdcdc"></div>
<div style="position:absolute;left:2304.5px;top:1517px;width:1px;height:20px;background:#dcdcdc"></div>
<div class="t " style="left:2163.3px;top:1516.5px;font-size:16px;line-height:20px;font-weight:normal;color:#000;letter-spacing:-0.917px;">1.8 GB</div>
<div style="position:absolute;left:2214px;top:1518.8px;width:1.6px;height:15.5px;background:#111"></div>
<div class="t " style="left:2220.9px;top:1516.5px;font-size:16px;line-height:20px;font-weight:normal;color:#000;letter-spacing:-1.225px;">13.16 GB</div>
<svg style="position:absolute;left:0px;top:1532px;" width="10" height="10" viewBox="0 0 10 10"><path d="M0 0A10 10 0 0 0 10 10H0z" fill="#22eeb0"/></svg>
<svg style="position:absolute;left:2526px;top:1532px;" width="10" height="10" viewBox="0 0 10 10"><path d="M10 0A10 10 0 0 1 0 10H10z" fill="#22d8b8"/></svg>
</body></html>
